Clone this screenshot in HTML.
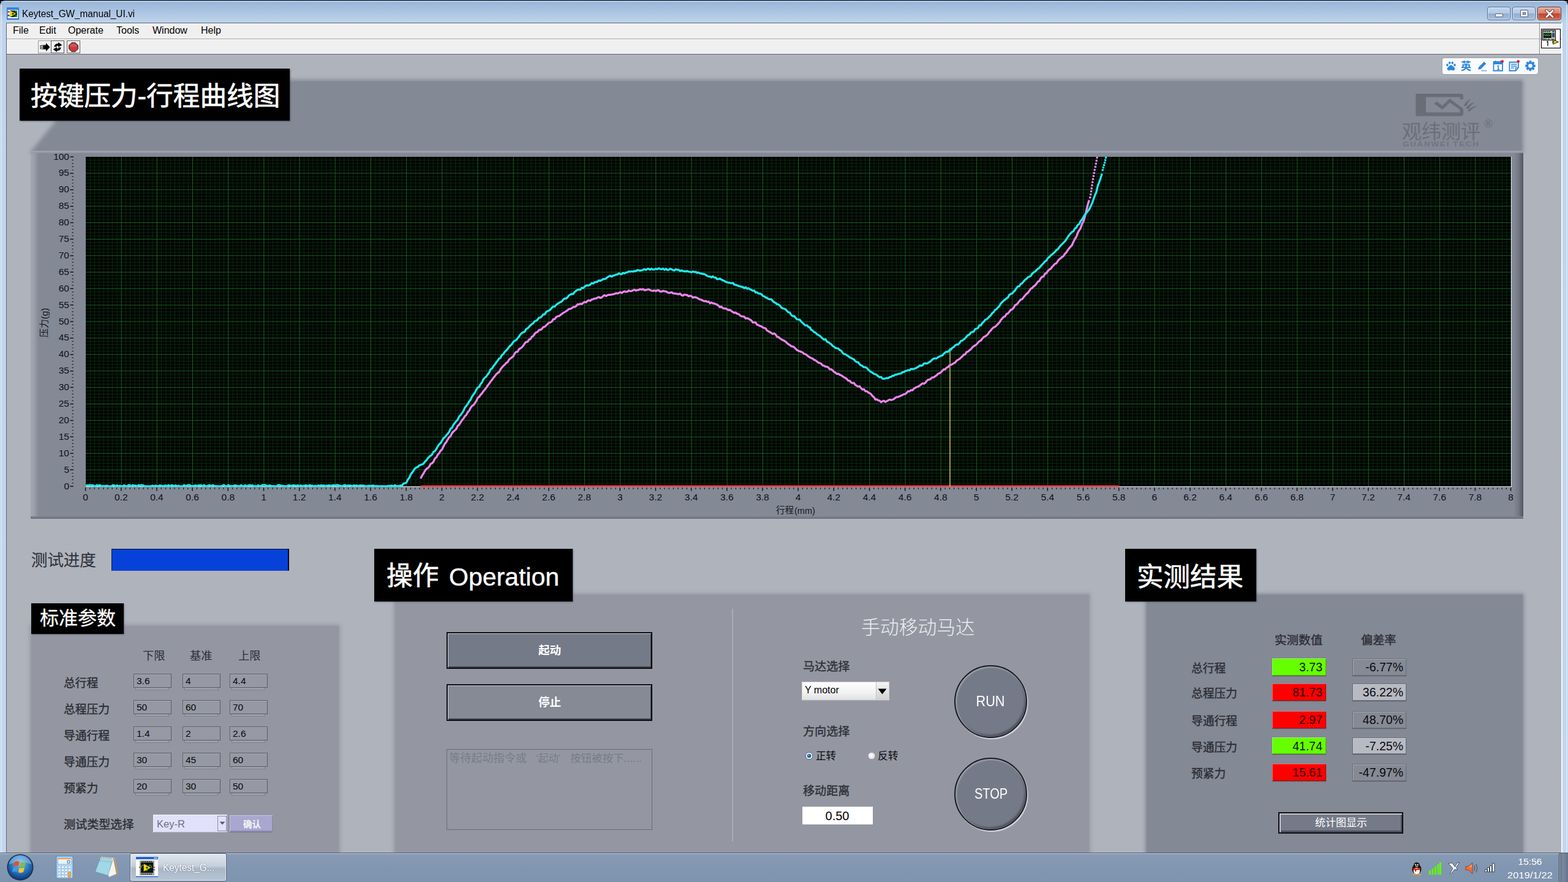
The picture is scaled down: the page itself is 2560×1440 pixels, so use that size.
<!DOCTYPE html>
<html lang="zh"><head><meta charset="utf-8"><title>Keytest_GW_manual_UI.vi</title>
<style>

html,body{margin:0;padding:0;background:#000;}
body{width:2560px;height:1440px;overflow:hidden;font-family:"Liberation Sans",sans-serif;}
#root{position:relative;width:2560px;height:1440px;overflow:hidden;background:#000;}
#root div{position:absolute;box-sizing:border-box;}
#root svg{position:absolute;}
.t{white-space:nowrap;font-family:"Liberation Sans",sans-serif;}
.num{background:#9598a3;border:1px solid #5f626c;box-shadow:0 4px 0 -1px #9fa2ad, 0 5px 0 -1px #6d707a;}
.btn{background:#757a88;border:2px solid #0b0b10;box-shadow:inset 1px 1px 0 #c9ccd4, inset -1px -2px 0 #4a4d58;}
svg text{font-family:"Liberation Sans","Noto Sans CJK SC",sans-serif;white-space:pre;}

</style></head><body>
<div id="root">
<div style="left:0px;top:1px;width:2560px;height:1392px;background:linear-gradient(180deg,#98b5d8 0px,#a6c0df 14px,#b4cbe6 26px,#c0d4ec 37px,#c3d6ed 100%);border-radius:8px 8px 0 0;"></div>
<div style="left:1px;top:8px;width:2px;height:1384px;background:#dbe8f6;opacity:.8;"></div>
<div style="left:2557px;top:8px;width:2px;height:1384px;background:#dbe8f6;opacity:.8;"></div>
<div style="left:1px;top:2px;width:2558px;height:1px;background:#dfeaf7;opacity:.7;border-radius:8px;"></div>
<div style="left:10px;top:37px;width:2539px;height:1356px;background:#5d6673;"></div>
<div style="left:2549px;top:37px;width:2px;height:1356px;background:#f4f8fd;"></div>
<svg style="left:11px;top:12px" width="20" height="20" viewBox="0 0 20 20"><rect x="0" y="0" width="20" height="20" fill="#1f6fd6"/><rect x="0" y="0" width="20" height="3" fill="#2a8ae8"/><rect x="1.5" y="4" width="17" height="14" fill="#fff"/><rect x="5" y="5" width="12" height="11" fill="#1d3a14"/><path d="M5 5 L15 10.5 L5 16 Z" fill="#f2d40c"/><path d="M12 5h5v4z M12 16h5v-4z" fill="#3b8a2a"/><rect x="1.5" y="6" width="3" height="2.5" fill="#d62a1a"/><rect x="1.5" y="12" width="3" height="2.5" fill="#1f3fc0"/><path d="M8 10.5h4M10 8.5v4" stroke="#222" stroke-width="1.2"/></svg>
<div class="t" style="left:35.5px;top:13px;font-size:16px;line-height:20px;color:#000;transform:scaleX(0.958);transform-origin:0 0;">Keytest_GW_manual_UI.vi</div>
<div style="left:2428px;top:11px;width:38px;height:22px;border:1px solid #5b6f8c;border-radius:4px;box-shadow:inset 0 0 0 1px rgba(255,255,255,.55);background:linear-gradient(180deg,#c3d6ee 0%,#b3c9e6 48%,#93aed3 52%,#a7c0e0 100%);"><div style="left:12px;top:10px;width:13px;height:6px;background:#f4f6fa;border:1px solid #56657c;border-radius:1px;"></div></div>
<div style="left:2469px;top:11px;width:38px;height:22px;border:1px solid #5b6f8c;border-radius:4px;box-shadow:inset 0 0 0 1px rgba(255,255,255,.55);background:linear-gradient(180deg,#c3d6ee 0%,#b3c9e6 48%,#93aed3 52%,#a7c0e0 100%);"><div style="left:12px;top:4px;width:13px;height:12px;background:#eef1f6;border:1px solid #56657c;border-radius:1px;"></div><div style="left:16px;top:8px;width:5px;height:4px;background:#9fb3d0;border:1px solid #56657c;"></div></div>
<div style="left:2510px;top:11px;width:39px;height:22px;border:1px solid #5a2a25;border-radius:4px;box-shadow:inset 0 0 0 1px rgba(255,255,255,.45);background:linear-gradient(180deg,#e9a99b 0%,#dc7f6c 48%,#c6442a 52%,#d2654a 100%);"><svg style="left:11px;top:3px" width="16" height="15" viewBox="0 0 16 15"><path d="M3 2.5 L13 12.5 M13 2.5 L3 12.5" stroke="#5a3a38" stroke-width="4.6" stroke-linecap="square"/><path d="M3 2.5 L13 12.5 M13 2.5 L3 12.5" stroke="#fff" stroke-width="2.8" stroke-linecap="square"/></svg></div>
<div style="left:11px;top:38px;width:2538px;height:25px;background:#f0f0f0;"></div>
<div class="t" style="left:21px;top:40px;font-size:16px;line-height:20px;color:#000;">File</div>
<div class="t" style="left:64px;top:40px;font-size:16px;line-height:20px;color:#000;">Edit</div>
<div class="t" style="left:111px;top:40px;font-size:16px;line-height:20px;color:#000;">Operate</div>
<div class="t" style="left:190px;top:40px;font-size:16px;line-height:20px;color:#000;">Tools</div>
<div class="t" style="left:249px;top:40px;font-size:16px;line-height:20px;color:#000;">Window</div>
<div class="t" style="left:328px;top:40px;font-size:16px;line-height:20px;color:#000;">Help</div>
<div style="left:11px;top:63px;width:2503px;height:1px;background:#a5a5a5;"></div>
<div style="left:11px;top:64px;width:2538px;height:25px;background:#f0f0f0;"></div>
<div style="left:11px;top:64px;width:2503px;height:1px;background:#fbfbfb;"></div>
<div style="left:11px;top:88px;width:2538px;height:1px;background:#63656b;"></div>
<div style="left:2513px;top:38px;width:1px;height:50px;background:#8a8a8a;"></div>
<div style="left:2514px;top:38px;width:1px;height:50px;background:#fdfdfd;"></div>
<div style="left:62px;top:66px;width:22px;height:21px;background:#f0f0f0;border:1px solid #9a9a9a;"><svg style="left:2px;top:3px" width="17" height="14" viewBox="0 0 17 14"><path d="M6.5 3.5h3.5V0l6.5 7L10 14v-3.5H6.5z" fill="#000"/><path d="M0.5 4h1.6v1.5H0.5zM0.5 6.3h1.6v1.5H0.5zM0.5 8.600h1.6v1.5H0.5zM2.800 3.500h1.500v1.600H2.800zM2.800 6.300h1.500v1.500H2.800zM2.800 9h1.500v1.600H2.800zM5 3.500h1.500v7H5z" fill="#000"/></svg></div>
<div style="left:83px;top:66px;width:22px;height:21px;background:#f0f0f0;border:1px solid #555;"><svg style="left:1px;top:2px" width="18" height="16" viewBox="0 0 18 16"><path d="M3.5 7.5 C3.5 3.5 7 2 10 2.2 L10 0 L16.5 4.5 L10 8 L10 5.8 C8 5.6 7 6.2 7.5 7.5 Z" fill="#000"/><path d="M14.5 8.5 C14.5 12.5 11 14 8 13.8 L8 16 L1.5 11.5 L8 8 L8 10.2 C10 10.4 11 9.8 10.5 8.5 Z" fill="#000"/></svg></div>
<div style="left:109px;top:66px;width:22px;height:21px;background:#f0f0f0;border:1px solid #666;"><svg style="left:2px;top:2px" width="16" height="16" viewBox="0 0 16 16"><path d="M5 0.7h6L15.3 5v6L11 15.3H5L0.7 11V5z" fill="#c43a3a" stroke="#1a1a1a" stroke-width="1"/><path d="M5.5 2.5h5l3 3v2h-11v-2z" fill="#d96a6a" opacity=".6"/></svg></div>
<svg style="left:2516px;top:47px" width="32" height="32" viewBox="0 0 32 32"><rect x="0.5" y="0.5" width="31" height="31" fill="#fff" stroke="#000" stroke-width="1.2"/><rect x="2.5" y="2.5" width="21" height="16" fill="#c8c8c8" stroke="#111" stroke-width="1.2"/><rect x="4" y="7" width="13" height="8" fill="#0b1a0b"/><path d="M4.5 11 l1.5-2 1.5 3 1.5-3 1.5 3 1.5-3 1.5 3 1.5-2.5 1 1.5" stroke="#2fd23a" stroke-width="0.9" fill="none"/><path d="M4 4.8h2M7 4.8h2M10 4.8h2M13 4.8h2M18.5 4.8h3" stroke="#111" stroke-width="1.4"/><rect x="18.5" y="7.5" width="3.2" height="6" fill="#2c4f9e" stroke="#111" stroke-width=".6"/><path d="M4 16.8h5M11 16.8h3M17 16.8h4" stroke="#333" stroke-width="1"/><path d="M19.5 18 L28.5 21.5 L19.5 25 Z" fill="#f4e80c" stroke="#111" stroke-width="1"/><path d="M18 21.5h4" stroke="#111" stroke-width="1"/><path d="M9.2 21.5 l1.8-1 v7.5" stroke="#000" stroke-width="1.3" fill="none"/></svg>
<div style="left:11px;top:89px;width:2538px;height:1304px;background:#afb3bc;"></div>
<div style="left:2355px;top:95px;width:156px;height:26px;background:#fbfbfd;border-radius:3px;box-shadow:0 0 2px rgba(80,80,100,.5);"><svg style="left:5px;top:4px" width="18" height="18" viewBox="0 0 18 18"><g fill="#2b86dc"><ellipse cx="3" cy="7.2" rx="1.7" ry="2.1"/><ellipse cx="6.7" cy="3.6" rx="1.7" ry="2.2"/><ellipse cx="11.3" cy="3.6" rx="1.7" ry="2.2"/><ellipse cx="15" cy="7.2" rx="1.7" ry="2.1"/><path d="M9 7.2c2.2 0 3.2 2 4.6 3.4 1.6 1.5 2.2 2.6 1.4 4.2-.8 1.5-2.6 1.2-3.8.9-1.4-.3-2.9-.3-4.400 0-1.2.3-3 .6-3.8-.9-.8-1.6-.2-2.7 1.4-4.2C5.800 9.2 6.800 7.2 9 7.2z"/></g></svg><svg role="img" aria-label="英" style="position:absolute;left:30.0px;top:3.0px;overflow:visible;" width="19.0" height="23.8"><text x="0" y="15.98" font-size="17" font-weight="bold" fill="#2b86dc">英</text></svg><svg style="left:56px;top:4px" width="19" height="18" viewBox="0 0 19 18"><path d="M2 14.5 L3.200 10.500 L12 1.700 L15.300 5 L6.500 13.800 Z" fill="#2b86dc"/><path d="M8 16.500h9" stroke="#2b86dc" stroke-width="1.300" stroke-dasharray="2 1"/></svg><svg style="left:82px;top:2px" width="20" height="21" viewBox="0 0 20 21"><path d="M1.500 4h14.500v14.500H1.500z" fill="#fff" stroke="#2b86dc" stroke-width="1.800"/><path d="M1.500 4h14.500v4H1.500z" fill="#2b86dc"/><path d="M4.500 2v3.500M13 2v3.500" stroke="#2b86dc" stroke-width="1.800"/><path d="M7.500 11.300l1.800-.8v6M7.300 16.500h4" stroke="#2b86dc" stroke-width="1.500" fill="none"/><circle cx="15.800" cy="3.200" r="2.300" fill="#e8202a"/></svg><svg style="left:108px;top:2px" width="20" height="21" viewBox="0 0 20 21"><path d="M1.500 4.500h14.500v9l-4.500 5H1.500z" fill="#fff" stroke="#2b86dc" stroke-width="1.800"/><path d="M4 8h9.500M4 11h9.500M4 14h5" stroke="#2b86dc" stroke-width="1.400"/><path d="M11.500 18.500v-5h4.500" fill="none" stroke="#2b86dc" stroke-width="1.400"/><circle cx="15.800" cy="3.200" r="2.300" fill="#e8202a"/></svg><svg style="left:134px;top:3px" width="19" height="19" viewBox="-9.500 -9.500 19 19"><g fill="#2b86dc"><rect x="-1.900" y="-8.300" width="3.800" height="4" transform="rotate(0)"/><rect x="-1.900" y="-8.300" width="3.800" height="4" transform="rotate(45)"/><rect x="-1.900" y="-8.300" width="3.800" height="4" transform="rotate(90)"/><rect x="-1.900" y="-8.300" width="3.800" height="4" transform="rotate(135)"/><rect x="-1.900" y="-8.300" width="3.800" height="4" transform="rotate(180)"/><rect x="-1.900" y="-8.300" width="3.800" height="4" transform="rotate(225)"/><rect x="-1.900" y="-8.300" width="3.800" height="4" transform="rotate(270)"/><rect x="-1.900" y="-8.300" width="3.800" height="4" transform="rotate(315)"/><circle r="6.300"/></g><circle r="3.300" fill="#fbfbfd"/></svg></div>
<svg style="left:0;top:0" width="2560" height="300" viewBox="0 0 2560 300"><defs><filter id="bl1" x="-5%" y="-20%" width="110%" height="140%"><feGaussianBlur stdDeviation="3"/></filter></defs><path d="M92 130 H2487 V250 H48 L92 196 Z" fill="#838995" filter="url(#bl1)"/><path d="M100 133 H2484 V250 H56 L100 200 Z" fill="#838995"/></svg>
<div style="left:50px;top:247px;width:2437px;height:599px;background:linear-gradient(90deg,#a3a7b1 0px,#9a9ea8 6px,#838995 13px,#838995 2421px,#757986 2429px,#525563 2437px);box-shadow:0 -1px 0 #9da1ab, 0 1px 0 #6b6f7a;"></div>
<div style="left:50px;top:247px;width:2437px;height:3px;background:linear-gradient(180deg,#a4a8b2,#8f939e);opacity:.9;"></div>
<div style="left:50px;top:843px;width:2437px;height:3px;background:linear-gradient(180deg,#7e828d,#70747f);"></div>
<svg style="left:2300px;top:148px" width="130" height="50" viewBox="0 0 130 50"><path d="M11.500 5 H85 q4 0 4 4 v5 h-5.500 v-3.500 H28 v25 H83.500 v-4.500 L67 19.500 55 31 41.500 21.500 45.500 17.500 55 24.500 67 13 89 29.500 V37.500 q0 4 -4 4 H11.500 z" fill="#696d77"/><path d="M89.500 25 q4-9 12-11 q-5 4-7 11z M93 29 q6-9 15-10 q-7 4-10 11z M96 33 q7-8 16-8 q-8 3-12 9z" fill="#696d77"/></svg>
<svg role="img" aria-label="观纬测评" style="position:absolute;left:2288.5px;top:196.0px;overflow:visible;" width="130.0" height="44.1"><text x="0" y="29.61" font-size="32" fill="#6b6f79">观纬测评</text></svg>
<div class="t" style="left:2289.5px;top:228.5px;font-size:11px;line-height:12px;color:#70747e;font-weight:bold;letter-spacing:1.2px;transform:scaleX(1.25);transform-origin:0 0;">GUANWEI TECH</div>
<div class="t" style="left:2423px;top:190.5px;font-size:19px;line-height:22px;color:#6f737d;font-weight:bold;">&#174;</div>
<div style="left:32px;top:112px;width:441px;height:85px;background:#000;box-shadow:1px 1px 2px rgba(40,40,50,.6);"></div>
<svg role="img" aria-label="按键压力-行程曲线图" style="position:absolute;left:50.0px;top:131.5px;overflow:visible;" width="410.0" height="60.2"><text x="0" y="40.42" font-size="43.65" fill="#fff" stroke="#fff" stroke-width="0.7" stroke-linejoin="round">按键压力-行程曲线图</text></svg>
<svg style="left:139.6px;top:256.0px" width="2328" height="539" viewBox="0 0 2328 539"><rect x="0" y="0" width="2328" height="539" fill="#020503"/><path d="M7.3 0V538M14.5 0V538M21.8 0V538M29.1 0V538M36.4 0V538M43.6 0V538M50.9 0V538M65.4 0V538M72.7 0V538M80.0 0V538M87.3 0V538M94.5 0V538M101.8 0V538M109.1 0V538M123.6 0V538M130.9 0V538M138.2 0V538M145.4 0V538M152.7 0V538M160.0 0V538M167.3 0V538M181.8 0V538M189.1 0V538M196.3 0V538M203.6 0V538M210.9 0V538M218.2 0V538M225.4 0V538M240.0 0V538M247.2 0V538M254.5 0V538M261.8 0V538M269.1 0V538M276.3 0V538M283.6 0V538M298.1 0V538M305.4 0V538M312.7 0V538M320.0 0V538M327.2 0V538M334.5 0V538M341.8 0V538M356.3 0V538M363.6 0V538M370.9 0V538M378.1 0V538M385.4 0V538M392.7 0V538M400.0 0V538M414.5 0V538M421.8 0V538M429.0 0V538M436.3 0V538M443.6 0V538M450.9 0V538M458.1 0V538M472.7 0V538M479.9 0V538M487.2 0V538M494.5 0V538M501.8 0V538M509.0 0V538M516.3 0V538M530.8 0V538M538.1 0V538M545.4 0V538M552.7 0V538M559.9 0V538M567.2 0V538M574.5 0V538M589.0 0V538M596.3 0V538M603.6 0V538M610.8 0V538M618.1 0V538M625.4 0V538M632.7 0V538M647.2 0V538M654.5 0V538M661.7 0V538M669.0 0V538M676.3 0V538M683.6 0V538M690.8 0V538M705.4 0V538M712.6 0V538M719.9 0V538M727.2 0V538M734.5 0V538M741.7 0V538M749.0 0V538M763.5 0V538M770.8 0V538M778.1 0V538M785.4 0V538M792.6 0V538M799.9 0V538M807.2 0V538M821.7 0V538M829.0 0V538M836.3 0V538M843.5 0V538M850.8 0V538M858.1 0V538M865.4 0V538M879.9 0V538M887.2 0V538M894.4 0V538M901.7 0V538M909.0 0V538M916.3 0V538M923.5 0V538M938.1 0V538M945.3 0V538M952.6 0V538M959.9 0V538M967.2 0V538M974.4 0V538M981.7 0V538M996.2 0V538M1003.5 0V538M1010.8 0V538M1018.1 0V538M1025.3 0V538M1032.6 0V538M1039.9 0V538M1054.4 0V538M1061.7 0V538M1069.0 0V538M1076.2 0V538M1083.5 0V538M1090.8 0V538M1098.1 0V538M1112.6 0V538M1119.9 0V538M1127.1 0V538M1134.4 0V538M1141.7 0V538M1149.0 0V538M1156.2 0V538M1170.8 0V538M1178.0 0V538M1185.3 0V538M1192.6 0V538M1199.9 0V538M1207.1 0V538M1214.4 0V538M1228.9 0V538M1236.2 0V538M1243.5 0V538M1250.8 0V538M1258.0 0V538M1265.3 0V538M1272.6 0V538M1287.1 0V538M1294.4 0V538M1301.7 0V538M1308.9 0V538M1316.2 0V538M1323.5 0V538M1330.8 0V538M1345.3 0V538M1352.6 0V538M1359.8 0V538M1367.1 0V538M1374.4 0V538M1381.7 0V538M1388.9 0V538M1403.5 0V538M1410.7 0V538M1418.0 0V538M1425.3 0V538M1432.6 0V538M1439.8 0V538M1447.1 0V538M1461.6 0V538M1468.9 0V538M1476.2 0V538M1483.5 0V538M1490.7 0V538M1498.0 0V538M1505.3 0V538M1519.8 0V538M1527.1 0V538M1534.4 0V538M1541.6 0V538M1548.9 0V538M1556.2 0V538M1563.5 0V538M1578.0 0V538M1585.3 0V538M1592.5 0V538M1599.8 0V538M1607.1 0V538M1614.4 0V538M1621.6 0V538M1636.2 0V538M1643.4 0V538M1650.7 0V538M1658.0 0V538M1665.3 0V538M1672.5 0V538M1679.8 0V538M1694.3 0V538M1701.6 0V538M1708.9 0V538M1716.2 0V538M1723.4 0V538M1730.7 0V538M1738.0 0V538M1752.5 0V538M1759.8 0V538M1767.1 0V538M1774.3 0V538M1781.6 0V538M1788.9 0V538M1796.2 0V538M1810.7 0V538M1818.0 0V538M1825.2 0V538M1832.5 0V538M1839.8 0V538M1847.1 0V538M1854.3 0V538M1868.9 0V538M1876.1 0V538M1883.4 0V538M1890.7 0V538M1898.0 0V538M1905.2 0V538M1912.5 0V538M1927.0 0V538M1934.3 0V538M1941.6 0V538M1948.9 0V538M1956.1 0V538M1963.4 0V538M1970.7 0V538M1985.2 0V538M1992.5 0V538M1999.8 0V538M2007.0 0V538M2014.3 0V538M2021.6 0V538M2028.9 0V538M2043.4 0V538M2050.7 0V538M2057.9 0V538M2065.2 0V538M2072.5 0V538M2079.8 0V538M2087.0 0V538M2101.6 0V538M2108.8 0V538M2116.1 0V538M2123.4 0V538M2130.7 0V538M2137.9 0V538M2145.2 0V538M2159.7 0V538M2167.0 0V538M2174.3 0V538M2181.6 0V538M2188.8 0V538M2196.1 0V538M2203.4 0V538M2217.9 0V538M2225.2 0V538M2232.5 0V538M2239.7 0V538M2247.0 0V538M2254.3 0V538M2261.6 0V538M2276.1 0V538M2283.4 0V538M2290.6 0V538M2297.9 0V538M2305.2 0V538M2312.5 0V538M2319.7 0V538M0 5.4H2327M0 10.8H2327M0 16.1H2327M0 21.5H2327M0 32.3H2327M0 37.7H2327M0 43.0H2327M0 48.4H2327M0 59.2H2327M0 64.6H2327M0 69.9H2327M0 75.3H2327M0 86.1H2327M0 91.5H2327M0 96.8H2327M0 102.2H2327M0 113.0H2327M0 118.4H2327M0 123.7H2327M0 129.1H2327M0 139.9H2327M0 145.3H2327M0 150.6H2327M0 156.0H2327M0 166.8H2327M0 172.2H2327M0 177.5H2327M0 182.9H2327M0 193.7H2327M0 199.1H2327M0 204.4H2327M0 209.8H2327M0 220.6H2327M0 226.0H2327M0 231.3H2327M0 236.7H2327M0 247.5H2327M0 252.9H2327M0 258.2H2327M0 263.6H2327M0 274.4H2327M0 279.8H2327M0 285.1H2327M0 290.5H2327M0 301.3H2327M0 306.7H2327M0 312.0H2327M0 317.4H2327M0 328.2H2327M0 333.6H2327M0 338.9H2327M0 344.3H2327M0 355.1H2327M0 360.5H2327M0 365.8H2327M0 371.2H2327M0 382.0H2327M0 387.4H2327M0 392.7H2327M0 398.1H2327M0 408.9H2327M0 414.3H2327M0 419.6H2327M0 425.0H2327M0 435.8H2327M0 441.2H2327M0 446.5H2327M0 451.9H2327M0 462.7H2327M0 468.1H2327M0 473.4H2327M0 478.8H2327M0 489.6H2327M0 495.0H2327M0 500.3H2327M0 505.7H2327M0 516.5H2327M0 521.9H2327M0 527.2H2327M0 532.6H2327" stroke="#0b2b11" stroke-width="0.9" fill="none"/><path d="M58.2 0V538M116.3 0V538M174.5 0V538M232.7 0V538M290.9 0V538M349.0 0V538M407.2 0V538M465.4 0V538M523.6 0V538M581.8 0V538M639.9 0V538M698.1 0V538M756.3 0V538M814.4 0V538M872.6 0V538M930.8 0V538M989.0 0V538M1047.1 0V538M1105.3 0V538M1163.5 0V538M1221.7 0V538M1279.8 0V538M1338.0 0V538M1396.2 0V538M1454.4 0V538M1512.5 0V538M1570.7 0V538M1628.9 0V538M1687.1 0V538M1745.2 0V538M1803.4 0V538M1861.6 0V538M1919.8 0V538M1977.9 0V538M2036.1 0V538M2094.3 0V538M2152.5 0V538M2210.7 0V538M2268.8 0V538M0 26.9H2327M0 53.8H2327M0 80.7H2327M0 107.6H2327M0 134.5H2327M0 161.4H2327M0 188.3H2327M0 215.2H2327M0 242.1H2327M0 269.0H2327M0 295.9H2327M0 322.8H2327M0 349.7H2327M0 376.6H2327M0 403.5H2327M0 430.4H2327M0 457.3H2327M0 484.2H2327M0 511.1H2327" stroke="#186024" stroke-width="1" fill="none"/><path d="M2327.5 0V539M0 538.5H2328" stroke="#e8e8ec" stroke-width="1.2" fill="none"/><path d="M546.8 537.5H1687.1" stroke="#f5262c" stroke-width="2.4"/><path d="M1411.0 312.0V538" stroke="#f2e860" stroke-width="1.25"/><path d="M546.8 525.3 549.2 520.3 551.5 516.9 553.8 512.7 556.2 509.5 558.5 508.2 560.8 505.9 563.1 501.3 565.5 500.4 567.8 497.6 570.1 492.5 572.4 490.7 574.8 486.3 577.1 483.8 579.4 479.8 581.8 477.6 584.1 472.7 586.4 468.4 588.7 465.6 591.1 461.3 593.4 457.9 595.7 456.1 598.0 451.0 600.4 448.5 602.7 446.4 605.0 444.3 607.3 439.2 609.7 437.4 612.0 433.6 614.3 430.1 616.7 427.3 619.0 423.4 621.3 421.5 623.6 417.0 626.0 414.6 628.3 409.9 630.6 406.7 632.9 405.5 635.3 402.2 637.6 398.8 639.9 393.6 642.3 392.0 644.6 388.5 646.9 386.3 649.2 382.7 651.6 380.0 653.9 377.1 656.2 373.5 658.5 370.6 660.9 366.8 663.2 364.4 665.5 360.9 667.8 358.2 670.2 354.9 672.5 353.0 674.8 351.5 677.2 346.9 679.5 343.9 681.8 341.3 684.1 339.5 686.5 336.5 688.8 335.2 691.1 331.0 693.4 329.2 695.8 327.4 698.1 325.6 700.4 321.0 702.8 318.3 705.1 318.3 707.4 314.0 709.7 312.7 712.1 311.0 714.4 308.3 716.7 304.7 719.0 302.2 721.4 302.1 723.7 298.4 726.0 297.7 728.4 293.7 730.7 292.6 733.0 289.0 735.3 286.7 737.7 285.9 740.0 282.6 742.3 282.5 744.6 281.2 747.0 277.9 749.3 277.6 751.6 275.4 753.9 273.1 756.3 270.9 758.6 270.4 760.9 269.1 763.3 265.2 765.6 265.1 767.9 261.8 770.2 260.4 772.6 260.2 774.9 258.4 777.2 256.7 779.5 254.9 781.9 253.6 784.2 252.2 786.5 250.7 788.9 248.4 791.2 248.3 793.5 247.2 795.8 245.1 798.2 245.2 800.5 243.9 802.8 240.9 805.1 241.0 807.5 239.9 809.8 240.4 812.1 238.4 814.5 237.0 816.8 237.7 819.1 235.3 821.4 234.4 823.8 235.2 826.1 232.9 828.4 232.6 830.7 231.3 833.1 231.4 835.4 229.8 837.7 229.0 840.0 230.3 842.4 229.6 844.7 227.3 847.0 225.9 849.4 227.3 851.7 226.1 854.0 225.2 856.3 225.4 858.7 224.8 861.0 224.4 863.3 223.8 865.6 222.7 868.0 223.1 870.3 222.4 872.6 220.9 875.0 222.5 877.3 220.6 879.6 219.7 881.9 220.4 884.3 220.2 886.6 218.2 888.9 219.4 891.2 219.1 893.6 218.1 895.9 217.1 898.2 218.4 900.5 217.6 902.9 217.4 905.2 216.0 907.5 217.0 909.9 215.9 912.2 217.8 914.5 217.5 916.8 216.8 919.2 216.3 921.5 217.7 923.8 218.5 926.1 219.0 928.5 218.1 930.8 219.3 933.1 217.8 935.5 218.0 937.8 220.0 940.1 220.0 942.4 218.9 944.8 219.7 947.1 219.6 949.4 221.2 951.7 222.1 954.1 222.1 956.4 221.1 958.7 222.9 961.1 223.1 963.4 223.4 965.7 223.8 968.0 224.3 970.4 223.4 972.7 225.9 975.0 226.8 977.3 224.8 979.7 225.5 982.0 225.7 984.3 227.8 986.6 226.9 989.0 227.5 991.3 230.0 993.6 229.1 996.0 229.5 998.3 230.6 1000.6 231.7 1002.9 233.0 1005.3 233.6 1007.6 234.7 1009.9 235.9 1012.2 235.3 1014.6 236.9 1016.9 236.3 1019.2 239.2 1021.6 237.8 1023.9 239.2 1026.2 239.5 1028.5 240.5 1030.9 241.4 1033.2 243.2 1035.5 245.6 1037.8 244.6 1040.2 247.1 1042.5 247.7 1044.8 247.7 1047.2 249.0 1049.5 250.3 1051.8 249.9 1054.1 251.8 1056.5 253.5 1058.8 254.8 1061.1 254.2 1063.4 256.3 1065.8 256.6 1068.1 258.9 1070.4 260.4 1072.7 260.7 1075.1 261.1 1077.4 264.0 1079.7 263.5 1082.1 264.4 1084.4 265.9 1086.7 267.1 1089.0 270.5 1091.4 270.1 1093.7 270.7 1096.0 274.2 1098.3 274.9 1100.7 276.2 1103.0 276.8 1105.3 278.4 1107.7 279.5 1110.0 280.1 1112.3 283.6 1114.6 284.9 1117.0 286.1 1119.3 287.6 1121.6 289.2 1123.9 288.3 1126.3 290.1 1128.6 293.8 1130.9 294.2 1133.2 296.3 1135.6 297.8 1137.9 299.3 1140.2 300.1 1142.6 301.8 1144.9 304.0 1147.2 306.0 1149.5 307.2 1151.9 309.3 1154.2 309.7 1156.5 310.8 1158.8 313.2 1161.2 315.5 1163.5 316.7 1165.8 317.6 1168.2 318.4 1170.5 319.4 1172.8 321.9 1175.1 322.1 1177.5 324.0 1179.8 325.9 1182.1 327.5 1184.4 328.6 1186.8 329.4 1189.1 331.5 1191.4 332.2 1193.8 334.2 1196.1 336.1 1198.4 336.7 1200.7 337.7 1203.1 340.7 1205.4 341.2 1207.7 342.6 1210.0 342.7 1212.4 344.0 1214.7 346.9 1217.0 346.9 1219.3 348.6 1221.7 351.4 1224.0 352.3 1226.3 354.6 1228.7 354.1 1231.0 355.9 1233.3 356.7 1235.6 358.3 1238.0 360.0 1240.3 361.1 1242.6 362.9 1244.9 365.5 1247.3 365.6 1249.6 368.5 1251.9 369.5 1254.3 369.2 1256.6 372.6 1258.9 373.9 1261.2 375.3 1263.6 374.7 1265.9 378.1 1268.2 380.0 1270.5 379.4 1272.9 382.9 1275.2 382.6 1277.5 384.7 1279.9 385.9 1282.2 387.5 1284.5 390.7 1286.8 392.3 1289.2 396.3 1291.5 395.8 1293.8 397.7 1296.1 398.2 1298.5 400.6 1300.8 399.1 1303.1 398.3 1305.4 400.2 1307.8 398.9 1310.1 397.7 1312.4 396.3 1314.8 397.1 1317.1 396.5 1319.4 395.4 1321.7 393.5 1324.1 392.1 1326.4 392.1 1328.7 391.1 1331.0 389.9 1333.4 388.9 1335.7 387.6 1338.0 387.4 1340.4 385.2 1342.7 382.7 1345.0 383.1 1347.3 380.9 1349.7 381.3 1352.0 378.6 1354.3 377.1 1356.6 376.0 1359.0 375.1 1361.3 373.8 1363.6 372.0 1365.9 369.9 1368.3 370.5 1370.6 369.2 1372.9 366.0 1375.3 364.0 1377.6 363.6 1379.9 362.3 1382.2 360.1 1384.6 360.0 1386.9 358.2 1389.2 356.8 1391.5 354.2 1393.9 353.4 1396.2 352.0 1398.5 349.2 1400.9 346.9 1403.2 347.0 1405.5 344.3 1407.8 343.4 1410.2 340.6 1412.5 339.6 1414.8 338.7 1417.1 337.1 1419.5 335.9 1421.8 332.9 1424.1 331.4 1426.5 330.1 1428.8 327.8 1431.1 326.0 1433.4 323.0 1435.8 322.8 1438.1 318.6 1440.4 318.1 1442.7 315.8 1445.1 314.2 1447.4 311.2 1449.7 309.3 1452.0 308.0 1454.4 306.2 1456.7 303.5 1459.0 301.0 1461.4 300.1 1463.7 297.0 1466.0 294.2 1468.3 293.3 1470.7 291.7 1473.0 289.4 1475.3 285.8 1477.6 283.6 1480.0 280.5 1482.3 278.4 1484.6 277.6 1487.0 275.4 1489.3 272.8 1491.6 270.6 1493.9 266.8 1496.3 263.9 1498.6 261.4 1500.9 260.7 1503.2 256.6 1505.6 255.700 1507.9 253.0 1510.2 249.8 1512.6 249.1 1514.9 246.7 1517.2 242.3 1519.5 241.4 1521.9 238.8 1524.2 235.8 1526.5 233.1 1528.8 232.5 1531.2 229.2 1533.5 226.5 1535.8 223.9 1538.1 222.2 1540.5 218.8 1542.8 215.3 1545.1 214.4 1547.5 211.5 1549.8 210.2 1552.1 207.3 1554.4 203.8 1556.8 202.9 1559.1 198.3 1561.4 195.8 1563.7 195.6 1566.1 190.9 1568.4 190.0 1570.7 186.5 1573.1 184.1 1575.4 183.0 1577.7 179.7 1580.0 177.4 1582.4 174.7 1584.7 173.9 1587.0 170.2 1589.3 167.3 1591.7 165.7 1594.0 163.5 1596.3 162.1 1598.6 158.5 1601.0 156.1 1603.3 152.3 1605.6 149.5 1608.0 146.6 1610.3 144.1 1612.6 138.7 1614.9 134.2 1617.3 130.7 1619.6 124.1 1621.9 120.1 1624.2 116.6 1626.6 109.4 1628.9 105.7 1631.2 97.7 1633.6 87.8 1635.9 78.5 1638.2 70.7" stroke="#ee84ee" stroke-width="3.3" fill="none" stroke-linejoin="round"/><rect x="1638.1" y="64.8" width="3.2" height="3.2" fill="#ee84ee"/><rect x="1639.1" y="59.8" width="3.2" height="3.2" fill="#ee84ee"/><rect x="1639.9" y="54.8" width="3.2" height="3.2" fill="#ee84ee"/><rect x="1640.6" y="49.8" width="3.2" height="3.2" fill="#ee84ee"/><rect x="1641.3" y="44.8" width="3.2" height="3.2" fill="#ee84ee"/><rect x="1642.1" y="39.8" width="3.2" height="3.2" fill="#ee84ee"/><rect x="1642.9" y="34.8" width="3.2" height="3.2" fill="#ee84ee"/><rect x="1643.8" y="29.8" width="3.2" height="3.2" fill="#ee84ee"/><rect x="1644.7" y="24.7" width="3.2" height="3.2" fill="#ee84ee"/><rect x="1645.6" y="19.7" width="3.2" height="3.2" fill="#ee84ee"/><rect x="1646.7" y="14.7" width="3.2" height="3.2" fill="#ee84ee"/><rect x="1647.7" y="9.7" width="3.2" height="3.2" fill="#ee84ee"/><rect x="1648.6" y="4.7" width="3.2" height="3.2" fill="#ee84ee"/><rect x="1649.5" y="-0.3" width="3.2" height="3.2" fill="#ee84ee"/><path d="M0.0 536.9 2.3 536.5 4.7 536.4 7.0 536.0 9.3 536.5 11.6 536.1 14.0 538.0 16.3 537.3 18.6 536.0 20.9 536.8 23.3 536.1 25.6 538.0 27.9 537.3 30.3 537.9 32.6 537.1 34.9 537.0 37.2 538.0 39.6 538.0 41.9 537.8 44.2 536.1 46.5 536.5 48.9 538.0 51.2 536.4 53.5 538.0 55.8 536.9 58.2 538.0 60.5 538.0 62.8 536.2 65.2 538.0 67.5 538.0 69.8 535.9 72.1 536.2 74.5 537.8 76.8 536.0 79.1 537.1 81.4 536.7 83.8 538.0 86.1 536.0 88.4 536.7 90.8 535.9 93.1 536.1 95.4 537.7 97.7 537.6 100.1 538.0 102.4 538.0 104.7 538.0 107.0 537.7 109.4 536.9 111.7 538.0 114.0 536.7 116.4 537.6 118.7 537.7 121.0 536.3 123.3 537.2 125.7 537.7 128.0 537.2 130.3 536.6 132.6 538.0 135.0 535.9 137.3 538.0 139.6 536.5 141.9 536.3 144.3 538.0 146.6 536.4 148.9 537.6 151.3 537.0 153.6 538.0 155.9 538.0 158.2 538.0 160.6 536.0 162.9 538.0 165.2 536.5 167.5 536.0 169.9 536.0 172.2 537.6 174.5 537.6 176.9 537.1 179.2 536.5 181.5 538.0 183.8 536.5 186.2 536.4 188.5 536.2 190.8 538.0 193.1 536.0 195.5 538.0 197.8 537.6 200.1 536.9 202.4 536.1 204.8 537.6 207.1 536.1 209.4 537.1 211.8 537.7 214.1 537.7 216.4 538.0 218.7 538.0 221.1 538.0 223.4 536.7 225.7 535.9 228.0 538.0 230.4 538.0 232.7 535.9 235.0 537.1 237.4 537.4 239.7 537.9 242.0 536.9 244.3 536.3 246.7 537.3 249.0 537.4 251.3 538.0 253.6 536.1 256.0 538.0 258.3 537.2 260.6 536.3 263.0 538.0 265.3 536.6 267.6 536.0 269.9 536.8 272.3 536.4 274.6 538.0 276.9 537.4 279.2 538.0 281.6 536.3 283.9 537.7 286.2 537.3 288.5 535.8 290.9 536.2 293.2 535.9 295.5 537.3 297.9 537.2 300.2 536.6 302.5 537.2 304.8 537.8 307.2 537.5 309.5 538.0 311.8 537.5 314.1 535.9 316.5 536.0 318.8 536.9 321.1 537.2 323.5 537.6 325.8 538.0 328.1 537.8 330.4 536.4 332.8 536.2 335.1 537.6 337.4 536.4 339.7 536.5 342.1 536.7 344.4 536.8 346.7 536.5 349.1 537.6 351.4 536.6 353.7 537.8 356.0 537.2 358.4 536.5 360.7 536.7 363.0 537.7 365.3 536.0 367.7 536.8 370.0 537.0 372.3 538.0 374.6 537.1 377.0 537.9 379.3 536.7 381.6 537.3 384.0 536.3 386.3 536.8 388.6 536.4 390.9 537.6 393.3 536.8 395.6 536.6 397.9 536.3 400.2 537.6 402.6 536.3 404.9 536.2 407.2 536.7 409.6 535.9 411.9 536.0 414.2 537.1 416.5 537.1 418.9 538.0 421.2 536.3 423.5 536.0 425.8 537.3 428.2 536.7 430.5 536.6 432.8 536.6 435.1 538.0 437.5 536.4 439.8 537.0 442.1 536.7 444.5 537.4 446.8 536.9 449.1 536.5 451.4 536.8 453.8 536.6 456.1 538.0 458.4 538.0 460.7 537.4 463.1 536.8 465.4 537.9 467.7 536.7 470.1 536.8 472.4 538.0 474.7 537.3 477.0 537.9 479.4 538.0 481.7 538.0 484.0 537.7 486.3 538.0 488.7 538.0 491.0 538.0 493.3 537.3 495.7 537.5 498.0 536.9 500.3 537.0 502.6 537.9 505.0 536.1 507.3 538.0 509.6 537.3 511.9 537.4 514.3 536.7 516.6 536.5 518.9 533.3 521.2 532.9 523.6 531.7 525.9 527.0 528.2 524.0 530.6 518.5 532.9 515.6 535.2 512.3 537.5 508.9 539.9 507.2 542.2 506.4 544.5 503.9 546.8 503.0 549.2 502.2 551.5 501.0 553.8 497.7 556.2 495.6 558.5 492.1 560.8 489.6 563.1 487.9 565.5 485.9 567.8 481.5 570.1 480.7 572.4 477.1 574.8 472.6 577.1 469.2 579.4 467.4 581.8 463.1 584.1 459.4 586.4 457.8 588.7 454.6 591.1 452.1 593.4 448.9 595.7 443.9 598.0 442.3 600.4 437.5 602.7 434.3 605.0 431.7 607.3 429.2 609.7 423.9 612.0 421.7 614.3 418.3 616.7 414.9 619.0 409.4 621.3 406.9 623.6 403.7 626.0 399.4 628.3 396.6 630.6 391.5 632.9 388.3 635.3 385.1 637.6 380.3 639.9 376.8 642.3 375.7 644.6 371.0 646.9 368.4 649.2 363.3 651.6 360.5 653.9 358.7 656.2 355.4 658.5 352.5 660.9 347.1 663.2 345.8 665.5 341.9 667.8 339.2 670.2 335.7 672.5 332.8 674.8 329.4 677.2 328.2 679.5 323.6 681.8 322.0 684.1 318.5 686.5 316.3 688.8 313.7 691.1 310.4 693.4 308.0 695.8 305.8 698.1 302.2 700.4 300.2 702.8 299.3 705.1 296.3 707.4 293.4 709.7 289.9 712.1 287.7 714.4 286.4 716.7 285.6 719.0 281.3 721.4 280.1 723.7 277.6 726.0 275.1 728.4 273.2 730.7 271.6 733.0 268.4 735.3 267.8 737.7 265.9 740.0 262.7 742.3 262.5 744.6 260.4 747.0 257.1 749.3 257.3 751.6 253.4 753.9 252.0 756.3 250.9 758.6 249.5 760.9 246.4 763.3 244.3 765.6 244.7 767.9 242.0 770.2 240.1 772.6 238.6 774.9 237.3 777.2 236.1 779.5 233.3 781.9 231.1 784.2 231.5 786.5 229.5 788.9 226.3 791.2 224.9 793.5 223.8 795.8 224.0 798.2 220.7 800.5 218.7 802.8 217.3 805.1 216.7 807.5 217.2 809.8 213.9 812.1 214.4 814.5 212.1 816.8 210.2 819.1 209.8 821.4 210.2 823.8 208.7 826.1 206.0 828.4 207.0 830.7 204.8 833.1 204.3 835.4 204.0 837.7 201.8 840.0 202.4 842.4 201.3 844.7 199.7 847.0 199.6 849.4 198.8 851.7 196.6 854.0 195.4 856.3 194.2 858.7 195.5 861.0 194.0 863.3 193.7 865.6 192.3 868.0 192.0 870.3 190.3 872.6 191.3 875.0 191.7 877.3 189.5 879.6 190.5 881.9 188.8 884.3 188.6 886.6 187.1 888.9 187.6 891.2 187.0 893.6 187.5 895.9 186.3 898.2 186.7 900.5 185.0 902.9 185.3 905.2 185.9 907.5 185.3 909.9 184.7 912.2 183.4 914.5 184.7 916.8 183.0 919.2 183.0 921.5 184.3 923.8 182.6 926.1 184.1 928.5 183.9 930.8 182.7 933.1 183.6 935.5 182.0 937.8 183.1 940.1 183.6 942.4 182.4 944.8 184.6 947.1 182.8 949.4 184.8 951.7 184.7 954.1 182.7 956.4 183.6 958.7 185.0 961.1 185.6 963.4 183.5 965.7 184.5 968.0 184.4 970.4 186.5 972.7 185.4 975.0 186.4 977.3 187.0 979.7 187.0 982.0 186.6 984.3 187.6 986.6 187.8 989.0 188.7 991.3 187.2 993.6 188.1 996.0 188.0 998.3 189.5 1000.6 188.9 1002.9 190.3 1005.3 190.6 1007.6 191.3 1009.9 191.4 1012.2 193.0 1014.6 194.5 1016.9 195.3 1019.2 195.6 1021.6 196.8 1023.9 195.2 1026.2 197.1 1028.5 197.1 1030.9 199.9 1033.2 199.4 1035.5 199.0 1037.8 200.5 1040.2 201.8 1042.5 202.5 1044.8 204.2 1047.2 204.8 1049.5 205.6 1051.8 205.7 1054.1 206.5 1056.5 205.9 1058.8 208.6 1061.1 209.1 1063.4 209.8 1065.8 210.9 1068.1 211.4 1070.4 212.3 1072.7 212.5 1075.1 214.5 1077.4 213.0 1079.7 215.4 1082.1 214.7 1084.4 216.3 1086.7 217.3 1089.0 218.7 1091.4 218.4 1093.7 221.7 1096.0 221.2 1098.3 223.2 1100.7 223.3 1103.0 224.2 1105.3 226.9 1107.7 227.9 1110.0 229.6 1112.3 230.4 1114.6 232.1 1117.0 232.7 1119.3 232.6 1121.6 235.7 1123.9 237.4 1126.3 238.5 1128.6 240.7 1130.9 241.1 1133.2 242.8 1135.6 246.0 1137.9 247.5 1140.2 248.0 1142.6 249.0 1144.9 251.6 1147.2 253.9 1149.5 254.2 1151.9 258.5 1154.2 260.1 1156.5 259.9 1158.8 262.6 1161.2 265.3 1163.5 265.6 1165.8 266.1 1168.2 269.1 1170.5 271.3 1172.8 273.7 1175.1 275.5 1177.5 275.0 1179.8 277.8 1182.1 278.4 1184.4 282.6 1186.8 283.8 1189.1 286.1 1191.4 287.0 1193.8 289.7 1196.1 290.9 1198.4 292.3 1200.7 294.4 1203.1 296.8 1205.4 298.6 1207.7 297.9 1210.0 301.7 1212.4 302.6 1214.7 304.6 1217.0 305.9 1219.3 308.8 1221.7 309.9 1224.0 312.1 1226.3 312.5 1228.7 313.1 1231.0 315.6 1233.3 316.6 1235.6 319.9 1238.0 322.1 1240.3 322.3 1242.6 324.0 1244.9 325.4 1247.3 327.5 1249.6 328.4 1251.9 329.7 1254.3 330.7 1256.6 333.9 1258.9 335.1 1261.2 335.6 1263.6 338.8 1265.9 340.6 1268.2 341.6 1270.5 343.7 1272.9 343.4 1275.2 344.8 1277.5 347.6 1279.9 349.6 1282.2 351.3 1284.5 352.4 1286.8 354.4 1289.2 355.0 1291.5 356.1 1293.8 358.3 1296.1 360.0 1298.5 359.4 1300.8 362.2 1303.1 362.3 1305.4 361.9 1307.8 361.2 1310.1 361.3 1312.4 359.7 1314.8 359.3 1317.1 357.5 1319.4 357.3 1321.7 355.7 1324.1 355.5 1326.4 354.4 1328.7 354.1 1331.0 353.6 1333.4 351.7 1335.7 351.3 1338.0 349.6 1340.4 349.3 1342.7 348.4 1345.0 348.7 1347.3 346.3 1349.7 346.5 1352.0 346.3 1354.3 345.5 1356.6 344.3 1359.0 343.1 1361.3 341.0 1363.6 341.0 1365.9 340.6 1368.3 337.7 1370.6 337.2 1372.9 337.6 1375.3 336.4 1377.6 335.1 1379.9 333.4 1382.2 330.9 1384.6 329.5 1386.9 329.2 1389.2 329.0 1391.5 327.2 1393.9 326.1 1396.2 324.9 1398.5 324.4 1400.9 321.4 1403.2 319.4 1405.5 318.1 1407.8 318.3 1410.2 315.6 1412.5 314.9 1414.8 311.8 1417.1 310.8 1419.5 307.8 1421.8 306.4 1424.1 306.5 1426.5 304.1 1428.8 300.7 1431.1 300.0 1433.4 298.2 1435.8 296.3 1438.1 293.5 1440.4 291.1 1442.7 290.2 1445.1 287.0 1447.4 286.1 1449.7 285.4 1452.0 281.5 1454.4 280.5 1456.7 279.5 1459.0 274.9 1461.4 275.3 1463.7 271.6 1466.0 269.6 1468.3 266.3 1470.7 265.3 1473.0 263.4 1475.3 260.8 1477.6 258.7 1480.0 255.3 1482.3 253.4 1484.6 249.9 1487.0 248.8 1489.3 246.0 1491.6 243.8 1493.9 239.4 1496.3 237.3 1498.6 234.9 1500.9 233.1 1503.2 231.3 1505.6 229.6 1507.9 225.4 1510.2 224.0 1512.6 222.9 1514.9 220.3 1517.2 218.2 1519.5 214.3 1521.9 211.6 1524.2 211.3 1526.5 207.5 1528.8 206.6 1531.2 203.5 1533.5 200.9 1535.8 199.4 1538.1 196.7 1540.5 195.7 1542.8 194.6 1545.1 191.0 1547.5 188.7 1549.8 187.6 1552.1 184.9 1554.4 182.9 1556.8 181.5 1559.1 178.5 1561.4 176.1 1563.7 173.6 1566.1 170.8 1568.4 169.3 1570.7 165.5 1573.1 163.6 1575.4 161.1 1577.7 159.4 1580.0 157.2 1582.4 155.2 1584.7 152.2 1587.0 150.9 1589.3 147.8 1591.7 145.0 1594.0 142.7 1596.3 140.4 1598.6 137.9 1601.0 134.7 1603.3 131.0 1605.6 127.7 1608.0 124.9 1610.3 122.7 1612.6 121.4 1614.9 116.9 1617.3 115.6 1619.6 111.3 1621.9 109.9 1624.2 105.1 1626.6 102.4 1628.9 98.3 1631.2 94.7 1633.6 91.8 1635.9 88.7 1638.2 85.9 1640.5 81.2 1642.9 76.1 1645.2 69.8 1647.5 63.2 1649.8 58.0 1652.2 47.9 1654.5 41.7 1656.8 35.1 1659.2 27.5" stroke="#1eeaf0" stroke-width="3.3" fill="none" stroke-linejoin="round"/><rect x="1658.7" y="20.0" width="3.2" height="3.2" fill="#1eeaf0"/><rect x="1659.8" y="15.9" width="3.2" height="3.2" fill="#1eeaf0"/><rect x="1660.9" y="11.9" width="3.2" height="3.2" fill="#1eeaf0"/><rect x="1662.0" y="7.9" width="3.2" height="3.2" fill="#1eeaf0"/><rect x="1663.0" y="3.8" width="3.2" height="3.2" fill="#1eeaf0"/><rect x="1663.9" y="-0.2" width="3.2" height="3.2" fill="#1eeaf0"/></svg>
<svg style="left:0;top:0" width="2560" height="860" viewBox="0 0 2560 860"><path d="M117.5 788.6H120M117.5 783.2H120M117.5 777.9H120M117.5 772.5H120M117.5 761.7H120M117.5 756.3H120M117.5 751.0H120M117.5 745.6H120M117.5 734.8H120M117.5 729.4H120M117.5 724.1H120M117.5 718.7H120M117.5 707.9H120M117.5 702.5H120M117.5 697.2H120M117.5 691.8H120M117.5 681.0H120M117.5 675.6H120M117.5 670.3H120M117.5 664.9H120M117.5 654.1H120M117.5 648.7H120M117.5 643.4H120M117.5 638.0H120M117.5 627.2H120M117.5 621.8H120M117.5 616.5H120M117.5 611.1H120M117.5 600.3H120M117.5 594.9H120M117.5 589.6H120M117.5 584.2H120M117.5 573.4H120M117.5 568.0H120M117.5 562.7H120M117.5 557.3H120M117.5 546.5H120M117.5 541.1H120M117.5 535.8H120M117.5 530.4H120M117.5 519.6H120M117.5 514.2H120M117.5 508.9H120M117.5 503.5H120M117.5 492.7H120M117.5 487.3H120M117.5 482.0H120M117.5 476.6H120M117.5 465.8H120M117.5 460.4H120M117.5 455.1H120M117.5 449.7H120M117.5 438.9H120M117.5 433.5H120M117.5 428.2H120M117.5 422.8H120M117.5 412.0H120M117.5 406.6H120M117.5 401.3H120M117.5 395.9H120M117.5 385.1H120M117.5 379.7H120M117.5 374.4H120M117.5 369.0H120M117.5 358.2H120M117.5 352.8H120M117.5 347.5H120M117.5 342.1H120M117.5 331.3H120M117.5 325.9H120M117.5 320.6H120M117.5 315.2H120M117.5 304.4H120M117.5 299.0H120M117.5 293.7H120M117.5 288.3H120M117.5 277.5H120M117.5 272.1H120M117.5 266.8H120M117.5 261.4H120M146.9 796V799M154.1 796V799M161.4 796V799M168.7 796V799M176.0 796V799M183.2 796V799M190.5 796V799M205.0 796V799M212.3 796V799M219.6 796V799M226.9 796V799M234.1 796V799M241.4 796V799M248.7 796V799M263.2 796V799M270.5 796V799M277.8 796V799M285.0 796V799M292.3 796V799M299.6 796V799M306.9 796V799M321.4 796V799M328.7 796V799M335.9 796V799M343.2 796V799M350.5 796V799M357.8 796V799M365.0 796V799M379.6 796V799M386.8 796V799M394.1 796V799M401.4 796V799M408.7 796V799M415.9 796V799M423.2 796V799M437.7 796V799M445.0 796V799M452.3 796V799M459.6 796V799M466.8 796V799M474.1 796V799M481.4 796V799M495.9 796V799M503.2 796V799M510.5 796V799M517.7 796V799M525.0 796V799M532.3 796V799M539.6 796V799M554.1 796V799M561.4 796V799M568.6 796V799M575.9 796V799M583.2 796V799M590.5 796V799M597.7 796V799M612.3 796V799M619.5 796V799M626.8 796V799M634.1 796V799M641.4 796V799M648.6 796V799M655.9 796V799M670.4 796V799M677.7 796V799M685.0 796V799M692.3 796V799M699.5 796V799M706.8 796V799M714.1 796V799M728.6 796V799M735.9 796V799M743.2 796V799M750.4 796V799M757.7 796V799M765.0 796V799M772.3 796V799M786.8 796V799M794.1 796V799M801.3 796V799M808.6 796V799M815.9 796V799M823.2 796V799M830.4 796V799M845.0 796V799M852.2 796V799M859.5 796V799M866.8 796V799M874.1 796V799M881.3 796V799M888.6 796V799M903.1 796V799M910.4 796V799M917.7 796V799M925.0 796V799M932.2 796V799M939.5 796V799M946.8 796V799M961.3 796V799M968.6 796V799M975.9 796V799M983.1 796V799M990.4 796V799M997.7 796V799M1005.0 796V799M1019.5 796V799M1026.8 796V799M1034.0 796V799M1041.3 796V799M1048.6 796V799M1055.9 796V799M1063.1 796V799M1077.7 796V799M1084.9 796V799M1092.2 796V799M1099.5 796V799M1106.8 796V799M1114.0 796V799M1121.3 796V799M1135.8 796V799M1143.1 796V799M1150.4 796V799M1157.7 796V799M1164.9 796V799M1172.2 796V799M1179.5 796V799M1194.0 796V799M1201.3 796V799M1208.6 796V799M1215.8 796V799M1223.1 796V799M1230.4 796V799M1237.7 796V799M1252.2 796V799M1259.5 796V799M1266.7 796V799M1274.0 796V799M1281.3 796V799M1288.6 796V799M1295.8 796V799M1310.4 796V799M1317.6 796V799M1324.9 796V799M1332.2 796V799M1339.5 796V799M1346.7 796V799M1354.0 796V799M1368.5 796V799M1375.8 796V799M1383.1 796V799M1390.4 796V799M1397.6 796V799M1404.9 796V799M1412.2 796V799M1426.7 796V799M1434.0 796V799M1441.3 796V799M1448.5 796V799M1455.8 796V799M1463.1 796V799M1470.4 796V799M1484.9 796V799M1492.2 796V799M1499.4 796V799M1506.7 796V799M1514.0 796V799M1521.3 796V799M1528.5 796V799M1543.1 796V799M1550.3 796V799M1557.6 796V799M1564.9 796V799M1572.2 796V799M1579.4 796V799M1586.7 796V799M1601.2 796V799M1608.5 796V799M1615.8 796V799M1623.1 796V799M1630.3 796V799M1637.6 796V799M1644.9 796V799M1659.4 796V799M1666.7 796V799M1674.0 796V799M1681.2 796V799M1688.5 796V799M1695.8 796V799M1703.1 796V799M1717.6 796V799M1724.9 796V799M1732.1 796V799M1739.4 796V799M1746.7 796V799M1754.0 796V799M1761.2 796V799M1775.8 796V799M1783.0 796V799M1790.3 796V799M1797.6 796V799M1804.9 796V799M1812.1 796V799M1819.4 796V799M1833.9 796V799M1841.2 796V799M1848.5 796V799M1855.8 796V799M1863.0 796V799M1870.3 796V799M1877.6 796V799M1892.1 796V799M1899.4 796V799M1906.7 796V799M1913.9 796V799M1921.2 796V799M1928.5 796V799M1935.8 796V799M1950.3 796V799M1957.6 796V799M1964.8 796V799M1972.1 796V799M1979.4 796V799M1986.7 796V799M1993.9 796V799M2008.5 796V799M2015.7 796V799M2023.0 796V799M2030.3 796V799M2037.6 796V799M2044.8 796V799M2052.1 796V799M2066.6 796V799M2073.9 796V799M2081.2 796V799M2088.5 796V799M2095.7 796V799M2103.0 796V799M2110.3 796V799M2124.8 796V799M2132.1 796V799M2139.4 796V799M2146.6 796V799M2153.9 796V799M2161.2 796V799M2168.5 796V799M2183.0 796V799M2190.3 796V799M2197.5 796V799M2204.8 796V799M2212.1 796V799M2219.4 796V799M2226.6 796V799M2241.2 796V799M2248.4 796V799M2255.7 796V799M2263.0 796V799M2270.3 796V799M2277.5 796V799M2284.8 796V799M2299.3 796V799M2306.6 796V799M2313.9 796V799M2321.2 796V799M2328.4 796V799M2335.7 796V799M2343.0 796V799M2357.5 796V799M2364.8 796V799M2372.1 796V799M2379.3 796V799M2386.6 796V799M2393.9 796V799M2401.2 796V799M2415.7 796V799M2423.0 796V799M2430.2 796V799M2437.5 796V799M2444.8 796V799M2452.1 796V799M2459.3 796V799" stroke="#20222c" stroke-width="1.2"/><path d="M114.5 794.0H120M114.5 767.1H120M114.5 740.2H120M114.5 713.3H120M114.5 686.4H120M114.5 659.5H120M114.5 632.6H120M114.5 605.7H120M114.5 578.8H120M114.5 551.9H120M114.5 525.0H120M114.5 498.1H120M114.5 471.2H120M114.5 444.3H120M114.5 417.4H120M114.5 390.5H120M114.5 363.6H120M114.5 336.7H120M114.5 309.8H120M114.5 282.9H120M114.5 256.0H120M139.6 796V801.5M197.8 796V801.5M255.9 796V801.5M314.1 796V801.5M372.3 796V801.5M430.5 796V801.5M488.7 796V801.5M546.8 796V801.5M605.0 796V801.5M663.2 796V801.5M721.4 796V801.5M779.5 796V801.5M837.7 796V801.5M895.9 796V801.5M954.1 796V801.5M1012.2 796V801.5M1070.4 796V801.5M1128.6 796V801.5M1186.8 796V801.5M1244.9 796V801.5M1303.1 796V801.5M1361.3 796V801.5M1419.5 796V801.5M1477.6 796V801.5M1535.8 796V801.5M1594.0 796V801.5M1652.1 796V801.5M1710.3 796V801.5M1768.5 796V801.5M1826.7 796V801.5M1884.8 796V801.5M1943.0 796V801.5M2001.2 796V801.5M2059.4 796V801.5M2117.6 796V801.5M2175.7 796V801.5M2233.9 796V801.5M2292.1 796V801.5M2350.2 796V801.5M2408.4 796V801.5M2466.6 796V801.5" stroke="#14161f" stroke-width="1.5"/></svg>
<div class="t" style="left:60px;top:784.5px;font-size:15.5px;line-height:18px;color:#0d0f18;width:53px;text-align:right;">0</div>
<div class="t" style="left:60px;top:757.6px;font-size:15.5px;line-height:18px;color:#0d0f18;width:53px;text-align:right;">5</div>
<div class="t" style="left:60px;top:730.7px;font-size:15.5px;line-height:18px;color:#0d0f18;width:53px;text-align:right;">10</div>
<div class="t" style="left:60px;top:703.8px;font-size:15.5px;line-height:18px;color:#0d0f18;width:53px;text-align:right;">15</div>
<div class="t" style="left:60px;top:676.9px;font-size:15.5px;line-height:18px;color:#0d0f18;width:53px;text-align:right;">20</div>
<div class="t" style="left:60px;top:650.0px;font-size:15.5px;line-height:18px;color:#0d0f18;width:53px;text-align:right;">25</div>
<div class="t" style="left:60px;top:623.1px;font-size:15.5px;line-height:18px;color:#0d0f18;width:53px;text-align:right;">30</div>
<div class="t" style="left:60px;top:596.2px;font-size:15.5px;line-height:18px;color:#0d0f18;width:53px;text-align:right;">35</div>
<div class="t" style="left:60px;top:569.3px;font-size:15.5px;line-height:18px;color:#0d0f18;width:53px;text-align:right;">40</div>
<div class="t" style="left:60px;top:542.4px;font-size:15.5px;line-height:18px;color:#0d0f18;width:53px;text-align:right;">45</div>
<div class="t" style="left:60px;top:515.5px;font-size:15.5px;line-height:18px;color:#0d0f18;width:53px;text-align:right;">50</div>
<div class="t" style="left:60px;top:488.6px;font-size:15.5px;line-height:18px;color:#0d0f18;width:53px;text-align:right;">55</div>
<div class="t" style="left:60px;top:461.7px;font-size:15.5px;line-height:18px;color:#0d0f18;width:53px;text-align:right;">60</div>
<div class="t" style="left:60px;top:434.8px;font-size:15.5px;line-height:18px;color:#0d0f18;width:53px;text-align:right;">65</div>
<div class="t" style="left:60px;top:407.9px;font-size:15.5px;line-height:18px;color:#0d0f18;width:53px;text-align:right;">70</div>
<div class="t" style="left:60px;top:381.0px;font-size:15.5px;line-height:18px;color:#0d0f18;width:53px;text-align:right;">75</div>
<div class="t" style="left:60px;top:354.1px;font-size:15.5px;line-height:18px;color:#0d0f18;width:53px;text-align:right;">80</div>
<div class="t" style="left:60px;top:327.2px;font-size:15.5px;line-height:18px;color:#0d0f18;width:53px;text-align:right;">85</div>
<div class="t" style="left:60px;top:300.3px;font-size:15.5px;line-height:18px;color:#0d0f18;width:53px;text-align:right;">90</div>
<div class="t" style="left:60px;top:273.4px;font-size:15.5px;line-height:18px;color:#0d0f18;width:53px;text-align:right;">95</div>
<div class="t" style="left:60px;top:246.5px;font-size:15.5px;line-height:18px;color:#0d0f18;width:53px;text-align:right;">100</div>
<div class="t" style="left:109.6px;top:803px;font-size:15.5px;line-height:18px;color:#0d0f18;width:60px;text-align:center;">0</div>
<div class="t" style="left:167.775px;top:803px;font-size:15.5px;line-height:18px;color:#0d0f18;width:60px;text-align:center;">0.2</div>
<div class="t" style="left:225.95px;top:803px;font-size:15.5px;line-height:18px;color:#0d0f18;width:60px;text-align:center;">0.4</div>
<div class="t" style="left:284.125px;top:803px;font-size:15.5px;line-height:18px;color:#0d0f18;width:60px;text-align:center;">0.6</div>
<div class="t" style="left:342.3px;top:803px;font-size:15.5px;line-height:18px;color:#0d0f18;width:60px;text-align:center;">0.8</div>
<div class="t" style="left:400.475px;top:803px;font-size:15.5px;line-height:18px;color:#0d0f18;width:60px;text-align:center;">1</div>
<div class="t" style="left:458.6500000000001px;top:803px;font-size:15.5px;line-height:18px;color:#0d0f18;width:60px;text-align:center;">1.2</div>
<div class="t" style="left:516.825px;top:803px;font-size:15.5px;line-height:18px;color:#0d0f18;width:60px;text-align:center;">1.4</div>
<div class="t" style="left:575.0px;top:803px;font-size:15.5px;line-height:18px;color:#0d0f18;width:60px;text-align:center;">1.6</div>
<div class="t" style="left:633.1750000000001px;top:803px;font-size:15.5px;line-height:18px;color:#0d0f18;width:60px;text-align:center;">1.8</div>
<div class="t" style="left:691.35px;top:803px;font-size:15.5px;line-height:18px;color:#0d0f18;width:60px;text-align:center;">2</div>
<div class="t" style="left:749.5250000000001px;top:803px;font-size:15.5px;line-height:18px;color:#0d0f18;width:60px;text-align:center;">2.2</div>
<div class="t" style="left:807.7000000000002px;top:803px;font-size:15.5px;line-height:18px;color:#0d0f18;width:60px;text-align:center;">2.4</div>
<div class="t" style="left:865.875px;top:803px;font-size:15.5px;line-height:18px;color:#0d0f18;width:60px;text-align:center;">2.6</div>
<div class="t" style="left:924.0500000000001px;top:803px;font-size:15.5px;line-height:18px;color:#0d0f18;width:60px;text-align:center;">2.8</div>
<div class="t" style="left:982.225px;top:803px;font-size:15.5px;line-height:18px;color:#0d0f18;width:60px;text-align:center;">3</div>
<div class="t" style="left:1040.4px;top:803px;font-size:15.5px;line-height:18px;color:#0d0f18;width:60px;text-align:center;">3.2</div>
<div class="t" style="left:1098.575px;top:803px;font-size:15.5px;line-height:18px;color:#0d0f18;width:60px;text-align:center;">3.4</div>
<div class="t" style="left:1156.75px;top:803px;font-size:15.5px;line-height:18px;color:#0d0f18;width:60px;text-align:center;">3.6</div>
<div class="t" style="left:1214.925px;top:803px;font-size:15.5px;line-height:18px;color:#0d0f18;width:60px;text-align:center;">3.8</div>
<div class="t" style="left:1273.1px;top:803px;font-size:15.5px;line-height:18px;color:#0d0f18;width:60px;text-align:center;">4</div>
<div class="t" style="left:1331.2749999999999px;top:803px;font-size:15.5px;line-height:18px;color:#0d0f18;width:60px;text-align:center;">4.2</div>
<div class="t" style="left:1389.45px;top:803px;font-size:15.5px;line-height:18px;color:#0d0f18;width:60px;text-align:center;">4.4</div>
<div class="t" style="left:1447.625px;top:803px;font-size:15.5px;line-height:18px;color:#0d0f18;width:60px;text-align:center;">4.6</div>
<div class="t" style="left:1505.8000000000002px;top:803px;font-size:15.5px;line-height:18px;color:#0d0f18;width:60px;text-align:center;">4.8</div>
<div class="t" style="left:1563.975px;top:803px;font-size:15.5px;line-height:18px;color:#0d0f18;width:60px;text-align:center;">5</div>
<div class="t" style="left:1622.1499999999999px;top:803px;font-size:15.5px;line-height:18px;color:#0d0f18;width:60px;text-align:center;">5.2</div>
<div class="t" style="left:1680.325px;top:803px;font-size:15.5px;line-height:18px;color:#0d0f18;width:60px;text-align:center;">5.4</div>
<div class="t" style="left:1738.5px;top:803px;font-size:15.5px;line-height:18px;color:#0d0f18;width:60px;text-align:center;">5.6</div>
<div class="t" style="left:1796.6750000000002px;top:803px;font-size:15.5px;line-height:18px;color:#0d0f18;width:60px;text-align:center;">5.8</div>
<div class="t" style="left:1854.85px;top:803px;font-size:15.5px;line-height:18px;color:#0d0f18;width:60px;text-align:center;">6</div>
<div class="t" style="left:1913.0249999999999px;top:803px;font-size:15.5px;line-height:18px;color:#0d0f18;width:60px;text-align:center;">6.2</div>
<div class="t" style="left:1971.2px;top:803px;font-size:15.5px;line-height:18px;color:#0d0f18;width:60px;text-align:center;">6.4</div>
<div class="t" style="left:2029.375px;top:803px;font-size:15.5px;line-height:18px;color:#0d0f18;width:60px;text-align:center;">6.6</div>
<div class="t" style="left:2087.55px;top:803px;font-size:15.5px;line-height:18px;color:#0d0f18;width:60px;text-align:center;">6.8</div>
<div class="t" style="left:2145.725px;top:803px;font-size:15.5px;line-height:18px;color:#0d0f18;width:60px;text-align:center;">7</div>
<div class="t" style="left:2203.9px;top:803px;font-size:15.5px;line-height:18px;color:#0d0f18;width:60px;text-align:center;">7.2</div>
<div class="t" style="left:2262.075px;top:803px;font-size:15.5px;line-height:18px;color:#0d0f18;width:60px;text-align:center;">7.4</div>
<div class="t" style="left:2320.25px;top:803px;font-size:15.5px;line-height:18px;color:#0d0f18;width:60px;text-align:center;">7.6</div>
<div class="t" style="left:2378.425px;top:803px;font-size:15.5px;line-height:18px;color:#0d0f18;width:60px;text-align:center;">7.8</div>
<div class="t" style="left:2436.6px;top:803px;font-size:15.5px;line-height:18px;color:#0d0f18;width:60px;text-align:center;">8</div>
<svg role="img" aria-label="压力" style="position:absolute;left:63.0px;top:551.0px;overflow:visible;transform:rotate(-90deg);transform-origin:0 0;" width="32.0" height="21.0"><text x="0" y="14.10" font-size="15" fill="#15171f">压力</text></svg>
<div class="t" style="left:63.5px;top:0px;font-size:15px;line-height:18px;color:#15171f;top:521px;transform:rotate(-90deg);transform-origin:0 0;">(g)</div>
<svg role="img" aria-label="行程" style="position:absolute;left:1267.0px;top:824.0px;overflow:visible;" width="31.0" height="20.3"><text x="0" y="13.63" font-size="14.5" fill="#15171f">行程</text></svg>
<div class="t" style="left:1297px;top:825px;font-size:14.5px;line-height:18px;color:#15171f;">(mm)</div>
<svg role="img" aria-label="测试进度" style="position:absolute;left:50.5px;top:899.0px;overflow:visible;" width="107.5" height="37.1"><text x="0" y="24.91" font-size="26.4" font-weight="300" fill="#2b2d35" stroke="#2b2d35" stroke-width="0.6" stroke-linejoin="round">测试进度</text></svg>
<div style="left:182px;top:896px;width:290px;height:36px;background:#0641da;border:1px solid #0a0f2e;border-right:2px solid #05060f;border-bottom:1px solid #3050b0;"></div>
<div style="left:51px;top:1022px;width:501.5px;height:374px;background:#9497a2;box-shadow:0 0 6px 2px #9497a2;"></div>
<div style="left:51px;top:985px;width:151px;height:50px;background:#000;box-shadow:1px 1px 2px rgba(40,40,50,.5);"></div>
<svg role="img" aria-label="标准参数" style="position:absolute;left:64.5px;top:990.5px;overflow:visible;" width="126.0" height="43.4"><text x="0" y="29.14" font-size="31" fill="#fff" stroke="#fff" stroke-width="0.31" stroke-linejoin="round">标准参数</text></svg>
<svg role="img" aria-label="下限" style="position:absolute;left:232.5px;top:1058.5px;overflow:visible;" width="38.5" height="26.6"><text x="0" y="17.86" font-size="18.25" fill="#2b2d35">下限</text></svg>
<svg role="img" aria-label="基准" style="position:absolute;left:309.5px;top:1058.5px;overflow:visible;" width="38.5" height="26.6"><text x="0" y="17.86" font-size="18.25" fill="#2b2d35">基准</text></svg>
<svg role="img" aria-label="上限" style="position:absolute;left:388.5px;top:1058.5px;overflow:visible;" width="38.5" height="26.6"><text x="0" y="17.86" font-size="18.25" fill="#2b2d35">上限</text></svg>
<svg role="img" aria-label="总行程" style="position:absolute;left:103.5px;top:1103.5px;overflow:visible;" width="58.4" height="26.3"><text x="0" y="17.67" font-size="18.8" fill="#2b2d35" stroke="#2b2d35" stroke-width="0.39" stroke-linejoin="round">总行程</text></svg>
<div style="left:221px;top:1121.5px;width:55px;height:5px;background:#9da0ab;border:1px solid #7f828d;border-top:none;"></div><div style="left:218px;top:1099.5px;width:62px;height:23px;background:#9699a4;border:1px solid #5a5d68;box-shadow:inset 1px 1px 0 #a6a9b3;"><div class="t" style="left:4px;top:1px;font-size:15.5px;line-height:19px;color:#06070c;">3.6</div></div>
<div style="left:301px;top:1121.5px;width:55px;height:5px;background:#9da0ab;border:1px solid #7f828d;border-top:none;"></div><div style="left:298px;top:1099.5px;width:62px;height:23px;background:#9699a4;border:1px solid #5a5d68;box-shadow:inset 1px 1px 0 #a6a9b3;"><div class="t" style="left:4px;top:1px;font-size:15.5px;line-height:19px;color:#06070c;">4</div></div>
<div style="left:378px;top:1121.5px;width:55px;height:5px;background:#9da0ab;border:1px solid #7f828d;border-top:none;"></div><div style="left:375px;top:1099.5px;width:62px;height:23px;background:#9699a4;border:1px solid #5a5d68;box-shadow:inset 1px 1px 0 #a6a9b3;"><div class="t" style="left:4px;top:1px;font-size:15.5px;line-height:19px;color:#06070c;">4.4</div></div>
<svg role="img" aria-label="总程压力" style="position:absolute;left:103.5px;top:1146.5px;overflow:visible;" width="77.2" height="26.3"><text x="0" y="17.67" font-size="18.8" fill="#2b2d35" stroke="#2b2d35" stroke-width="0.39" stroke-linejoin="round">总程压力</text></svg>
<div style="left:221px;top:1164.5px;width:55px;height:5px;background:#9da0ab;border:1px solid #7f828d;border-top:none;"></div><div style="left:218px;top:1142.5px;width:62px;height:23px;background:#9699a4;border:1px solid #5a5d68;box-shadow:inset 1px 1px 0 #a6a9b3;"><div class="t" style="left:4px;top:1px;font-size:15.5px;line-height:19px;color:#06070c;">50</div></div>
<div style="left:301px;top:1164.5px;width:55px;height:5px;background:#9da0ab;border:1px solid #7f828d;border-top:none;"></div><div style="left:298px;top:1142.5px;width:62px;height:23px;background:#9699a4;border:1px solid #5a5d68;box-shadow:inset 1px 1px 0 #a6a9b3;"><div class="t" style="left:4px;top:1px;font-size:15.5px;line-height:19px;color:#06070c;">60</div></div>
<div style="left:378px;top:1164.5px;width:55px;height:5px;background:#9da0ab;border:1px solid #7f828d;border-top:none;"></div><div style="left:375px;top:1142.5px;width:62px;height:23px;background:#9699a4;border:1px solid #5a5d68;box-shadow:inset 1px 1px 0 #a6a9b3;"><div class="t" style="left:4px;top:1px;font-size:15.5px;line-height:19px;color:#06070c;">70</div></div>
<svg role="img" aria-label="导通行程" style="position:absolute;left:103.5px;top:1189.5px;overflow:visible;" width="77.2" height="26.3"><text x="0" y="17.67" font-size="18.8" fill="#2b2d35" stroke="#2b2d35" stroke-width="0.39" stroke-linejoin="round">导通行程</text></svg>
<div style="left:221px;top:1207.5px;width:55px;height:5px;background:#9da0ab;border:1px solid #7f828d;border-top:none;"></div><div style="left:218px;top:1185.5px;width:62px;height:23px;background:#9699a4;border:1px solid #5a5d68;box-shadow:inset 1px 1px 0 #a6a9b3;"><div class="t" style="left:4px;top:1px;font-size:15.5px;line-height:19px;color:#06070c;">1.4</div></div>
<div style="left:301px;top:1207.5px;width:55px;height:5px;background:#9da0ab;border:1px solid #7f828d;border-top:none;"></div><div style="left:298px;top:1185.5px;width:62px;height:23px;background:#9699a4;border:1px solid #5a5d68;box-shadow:inset 1px 1px 0 #a6a9b3;"><div class="t" style="left:4px;top:1px;font-size:15.5px;line-height:19px;color:#06070c;">2</div></div>
<div style="left:378px;top:1207.5px;width:55px;height:5px;background:#9da0ab;border:1px solid #7f828d;border-top:none;"></div><div style="left:375px;top:1185.5px;width:62px;height:23px;background:#9699a4;border:1px solid #5a5d68;box-shadow:inset 1px 1px 0 #a6a9b3;"><div class="t" style="left:4px;top:1px;font-size:15.5px;line-height:19px;color:#06070c;">2.6</div></div>
<svg role="img" aria-label="导通压力" style="position:absolute;left:103.5px;top:1232.5px;overflow:visible;" width="77.2" height="26.3"><text x="0" y="17.67" font-size="18.8" fill="#2b2d35" stroke="#2b2d35" stroke-width="0.39" stroke-linejoin="round">导通压力</text></svg>
<div style="left:221px;top:1250.5px;width:55px;height:5px;background:#9da0ab;border:1px solid #7f828d;border-top:none;"></div><div style="left:218px;top:1228.5px;width:62px;height:23px;background:#9699a4;border:1px solid #5a5d68;box-shadow:inset 1px 1px 0 #a6a9b3;"><div class="t" style="left:4px;top:1px;font-size:15.5px;line-height:19px;color:#06070c;">30</div></div>
<div style="left:301px;top:1250.5px;width:55px;height:5px;background:#9da0ab;border:1px solid #7f828d;border-top:none;"></div><div style="left:298px;top:1228.5px;width:62px;height:23px;background:#9699a4;border:1px solid #5a5d68;box-shadow:inset 1px 1px 0 #a6a9b3;"><div class="t" style="left:4px;top:1px;font-size:15.5px;line-height:19px;color:#06070c;">45</div></div>
<div style="left:378px;top:1250.5px;width:55px;height:5px;background:#9da0ab;border:1px solid #7f828d;border-top:none;"></div><div style="left:375px;top:1228.5px;width:62px;height:23px;background:#9699a4;border:1px solid #5a5d68;box-shadow:inset 1px 1px 0 #a6a9b3;"><div class="t" style="left:4px;top:1px;font-size:15.5px;line-height:19px;color:#06070c;">60</div></div>
<svg role="img" aria-label="预紧力" style="position:absolute;left:103.5px;top:1275.5px;overflow:visible;" width="58.4" height="26.3"><text x="0" y="17.67" font-size="18.8" fill="#2b2d35" stroke="#2b2d35" stroke-width="0.39" stroke-linejoin="round">预紧力</text></svg>
<div style="left:221px;top:1293.5px;width:55px;height:5px;background:#9da0ab;border:1px solid #7f828d;border-top:none;"></div><div style="left:218px;top:1271.5px;width:62px;height:23px;background:#9699a4;border:1px solid #5a5d68;box-shadow:inset 1px 1px 0 #a6a9b3;"><div class="t" style="left:4px;top:1px;font-size:15.5px;line-height:19px;color:#06070c;">20</div></div>
<div style="left:301px;top:1293.5px;width:55px;height:5px;background:#9da0ab;border:1px solid #7f828d;border-top:none;"></div><div style="left:298px;top:1271.5px;width:62px;height:23px;background:#9699a4;border:1px solid #5a5d68;box-shadow:inset 1px 1px 0 #a6a9b3;"><div class="t" style="left:4px;top:1px;font-size:15.5px;line-height:19px;color:#06070c;">30</div></div>
<div style="left:378px;top:1293.5px;width:55px;height:5px;background:#9da0ab;border:1px solid #7f828d;border-top:none;"></div><div style="left:375px;top:1271.5px;width:62px;height:23px;background:#9699a4;border:1px solid #5a5d68;box-shadow:inset 1px 1px 0 #a6a9b3;"><div class="t" style="left:4px;top:1px;font-size:15.5px;line-height:19px;color:#06070c;">50</div></div>
<svg role="img" aria-label="测试类型选择" style="position:absolute;left:103.5px;top:1334.5px;overflow:visible;" width="116.5" height="26.6"><text x="0" y="17.86" font-size="19.08" fill="#2b2d35" stroke="#2b2d35" stroke-width="0.4" stroke-linejoin="round">测试类型选择</text></svg>
<div style="left:250px;top:1330px;width:121px;height:29px;background:#e2e1fb;box-shadow:inset 1px 1px 0 #f4f4ff, inset -1px -1px 0 #bdbcda;"><div class="t" style="left:6px;top:5px;font-size:16.5px;line-height:20px;color:#6e6e84;">Key-R</div><div style="left:105px;top:2px;width:15px;height:25px;background:#e2e1fb;border:1px solid #8e8da8;"></div><svg style="left:108px;top:11px" width="10" height="6" viewBox="0 0 10 6"><path d="M0.500 0.500h9L5 5.500z" fill="#5d5d78"/></svg></div>
<div style="left:375px;top:1331px;width:70px;height:27px;background:#a9a7cf;box-shadow:inset 1px 1px 0 #c8c6e6, inset -1px -2px 0 #8c8ab2, 0 1px 1px #77768f;"><svg role="img" aria-label="确认" style="position:absolute;left:21.5px;top:5.5px;overflow:visible;" width="31.0" height="20.3"><text x="0" y="13.63" font-size="14.5" font-weight="bold" fill="#f4f4fb">确认</text></svg></div>
<div style="left:644.5px;top:970.5px;width:1133px;height:425px;background:#9497a2;box-shadow:0 0 6px 2px #9497a2;"></div>
<div style="left:611px;top:896px;width:324px;height:86px;background:#000;box-shadow:1px 1px 2px rgba(40,40,50,.5);"></div>
<svg role="img" aria-label="操作" style="position:absolute;left:631.0px;top:914.5px;overflow:visible;" width="87.5" height="60.2"><text x="0" y="40.42" font-size="42.75" fill="#fff" stroke="#fff" stroke-width="0.6" stroke-linejoin="round">操作</text></svg>
<svg role="img" aria-label="Operation" style="position:absolute;left:731.0px;top:918.0px;overflow:visible;" width="183.0" height="56.0"><text x="2" y="37.60" font-size="40" fill="#fff" stroke="#fff" stroke-width="0.4" stroke-linejoin="round" textLength="180" lengthAdjust="spacingAndGlyphs">Operation</text></svg>
<div style="left:1195px;top:994px;width:2px;height:380px;background:#a9acb6;"></div>
<div style="left:729px;top:1032px;width:336px;height:60px;background:#757a88;border:2px solid #0c0d12;box-shadow:inset 1px 1px 0 0 #c9ccd4, inset -1px -2px 0 0 #3f424d;"><svg role="img" aria-label="起动" style="position:absolute;left:147.5px;top:16.5px;overflow:visible;" width="39.0" height="25.9"><text x="0" y="17.39" font-size="18.5" font-weight="bold" fill="#fff">起动</text></svg></div>
<div style="left:729px;top:1117px;width:336px;height:60px;background:#858a95;border:2px solid #0c0d12;box-shadow:inset 1px 1px 0 0 #c9ccd4, inset -1px -2px 0 0 #3f424d;"><svg role="img" aria-label="停止" style="position:absolute;left:147.5px;top:16.5px;overflow:visible;" width="39.0" height="25.9"><text x="0" y="17.39" font-size="18.5" font-weight="bold" fill="#fff">停止</text></svg></div>
<div style="left:729px;top:1223px;width:336px;height:132px;border:1px solid #686b75;"></div>
<svg role="img" aria-label="等待起动指令或" style="position:absolute;left:732.5px;top:1226.5px;overflow:visible;" width="129.0" height="25.2"><text x="0" y="16.92" font-size="18.14" fill="#797c87">等待起动指令或</text></svg>
<svg role="img" aria-label="‘起动’" style="position:absolute;left:866.0px;top:1226.5px;overflow:visible;" width="62.0" height="25.2"><text x="9" y="16.92" font-size="16.5" fill="#797c87">‘起动’</text></svg>
<svg role="img" aria-label="按钮被按下......" style="position:absolute;left:931.0px;top:1226.5px;overflow:visible;" width="116.0" height="25.2"><text x="0" y="16.92" font-size="17.5" fill="#797c87">按钮被按下......</text></svg>
<svg role="img" aria-label="手动移动马达" style="position:absolute;left:1406.0px;top:1006.0px;overflow:visible;" width="187.0" height="43.4"><text x="0" y="29.14" font-size="30.83" font-weight="300" fill="#eceef2">手动移动马达</text></svg>
<svg role="img" aria-label="马达选择" style="position:absolute;left:1310.5px;top:1076.5px;overflow:visible;" width="78.5" height="26.6"><text x="0" y="17.86" font-size="19.12" fill="#2e3038" stroke="#2e3038" stroke-width="0.4" stroke-linejoin="round">马达选择</text></svg>
<div style="left:1309px;top:1113px;width:143px;height:30px;background:linear-gradient(180deg,#ffffff 0%,#f2f2f2 60%,#e1e1e1 100%);box-shadow:inset 0 0 0 1px #d4d4d8, 0 1px 0 #a8abb4;"><div class="t" style="left:5px;top:4px;font-size:16px;line-height:20px;color:#000;">Y motor</div><div style="left:121px;top:1px;width:21px;height:28px;background:linear-gradient(180deg,#f4f4f4,#d2d2d2);border-left:1px solid #c2c2c6;"></div><svg style="left:124px;top:11px" width="15" height="10" viewBox="0 0 15 10"><path d="M0.500 0.500h14L7.500 9.500z" fill="#000"/></svg></div>
<svg role="img" aria-label="方向选择" style="position:absolute;left:1310.5px;top:1183.0px;overflow:visible;" width="78.5" height="26.6"><text x="0" y="17.86" font-size="19.12" fill="#2e3038" stroke="#2e3038" stroke-width="0.4" stroke-linejoin="round">方向选择</text></svg>
<svg style="left:1314px;top:1227px" width="14" height="14" viewBox="0 0 14 14"><circle cx="7" cy="7" r="5.800" fill="#f2f4f8" stroke="#59617a" stroke-width="1"/><circle cx="7" cy="7" r="3.300" fill="#1d5f8f"/><circle cx="6.200" cy="6" r="1.300" fill="#6fb6d8"/></svg>
<svg role="img" aria-label="正转" style="position:absolute;left:1332.0px;top:1223.5px;overflow:visible;" width="35.0" height="23.8"><text x="0" y="15.98" font-size="16.5" fill="#08090d">正转</text></svg>
<svg style="left:1415.5px;top:1227px" width="14" height="14" viewBox="0 0 14 14"><circle cx="7" cy="7" r="5.800" fill="#e6e7ea" stroke="#9a9ca6" stroke-width="1"/><circle cx="6.500" cy="6.500" r="3" fill="#f8f8fa"/></svg>
<svg role="img" aria-label="反转" style="position:absolute;left:1432.5px;top:1223.5px;overflow:visible;" width="35.5" height="23.8"><text x="0" y="15.98" font-size="16.75" fill="#08090d">反转</text></svg>
<svg role="img" aria-label="移动距离" style="position:absolute;left:1310.5px;top:1279.5px;overflow:visible;" width="78.5" height="26.6"><text x="0" y="17.86" font-size="19.12" fill="#2e3038" stroke="#2e3038" stroke-width="0.4" stroke-linejoin="round">移动距离</text></svg>
<div style="left:1310px;top:1316.5px;width:114.5px;height:29.5px;background:#fff;"><div class="t" style="left:0;top:3px;width:114px;text-align:center;font-size:20px;line-height:24px;color:#000;">0.50</div></div>
<div style="left:1557.5px;top:1085.5px;width:119.0px;height:119.0px;border-radius:50%;background:#757a88;border:2px solid #1b1c22;box-shadow:1.500px 2px 1px #d6d8de, inset 1px 1px 2px 1px #9ea2ad, inset -2px -3px 3px 0 #4c4f5a;"></div><div class="t" style="left:1557px;top:1131.5px;font-size:23px;line-height:27px;color:#fff;width:120px;text-align:center;transform:scaleX(0.94);transform-origin:50% 0;">RUN</div>
<div style="left:1558.0px;top:1236.5px;width:119.0px;height:119.0px;border-radius:50%;background:#757a88;border:2px solid #1b1c22;box-shadow:1.500px 2px 1px #d6d8de, inset 1px 1px 2px 1px #9ea2ad, inset -2px -3px 3px 0 #4c4f5a;"></div><div class="t" style="left:1557.5px;top:1282.5px;font-size:23px;line-height:27px;color:#fff;width:120px;text-align:center;transform:scaleX(0.87);transform-origin:50% 0;">STOP</div>
<div style="left:1871.5px;top:971px;width:614px;height:425px;background:#838995;box-shadow:0 0 6px 2px #838995;"></div>
<div style="left:1837px;top:896px;width:214px;height:86px;background:#000;box-shadow:1px 1px 2px rgba(40,40,50,.5);"></div>
<svg role="img" aria-label="实测结果" style="position:absolute;left:1856.0px;top:915.5px;overflow:visible;" width="176.0" height="60.9"><text x="0" y="40.89" font-size="43.5" fill="#fff" stroke="#fff" stroke-width="0.6" stroke-linejoin="round">实测结果</text></svg>
<svg role="img" aria-label="实测数值" style="position:absolute;left:2080.5px;top:1034.0px;overflow:visible;" width="80.5" height="27.4"><text x="0" y="18.42" font-size="19.63" fill="#2b2d35" stroke="#2b2d35" stroke-width="0.39" stroke-linejoin="round">实测数值</text></svg>
<svg role="img" aria-label="偏差率" style="position:absolute;left:2222.0px;top:1034.0px;overflow:visible;" width="59.5" height="27.0"><text x="0" y="18.14" font-size="19.17" fill="#2b2d35" stroke="#2b2d35" stroke-width="0.4" stroke-linejoin="round">偏差率</text></svg>
<svg role="img" aria-label="总行程" style="position:absolute;left:1944.5px;top:1080.0px;overflow:visible;" width="58.4" height="26.3"><text x="0" y="17.67" font-size="18.8" fill="#2b2d35" stroke="#2b2d35" stroke-width="0.39" stroke-linejoin="round">总行程</text></svg>
<div style="left:2077px;top:1075px;width:88px;height:27.5px;background:#66ff00;box-shadow:inset 1px 1px 0 rgba(255,255,255,.35), inset -1px -1px 0 rgba(0,0,0,.25), 0 1px 1px rgba(60,60,70,.6);"><div class="t" style="right:6px;top:3px;font-size:19.500px;line-height:23px;color:#0a1400;">3.73</div></div>
<div style="left:2208px;top:1075px;width:88px;height:27.5px;background:#858a95;border:1px solid #6d717c;box-shadow:inset 1px 1px 0 rgba(255,255,255,.25), 0 1px 1px rgba(60,60,70,.5);"><div class="t" style="right:4px;top:2px;font-size:19.500px;line-height:23px;color:#08090d;">-6.77%</div></div>
<svg role="img" aria-label="总程压力" style="position:absolute;left:1944.5px;top:1121.0px;overflow:visible;" width="77.2" height="26.3"><text x="0" y="17.67" font-size="18.8" fill="#2b2d35" stroke="#2b2d35" stroke-width="0.39" stroke-linejoin="round">总程压力</text></svg>
<div style="left:2077px;top:1116px;width:88px;height:27.5px;background:#ff0000;box-shadow:inset 1px 1px 0 rgba(255,255,255,.35), inset -1px -1px 0 rgba(0,0,0,.25), 0 1px 1px rgba(60,60,70,.6);"><div class="t" style="right:6px;top:3px;font-size:19.500px;line-height:23px;color:#2a0000;">81.73</div></div>
<div style="left:2208px;top:1116px;width:88px;height:27.5px;background:#b7bac2;border:1px solid #6d717c;box-shadow:inset 1px 1px 0 rgba(255,255,255,.25), 0 1px 1px rgba(60,60,70,.5);"><div class="t" style="right:4px;top:2px;font-size:19.500px;line-height:23px;color:#08090d;">36.22%</div></div>
<svg role="img" aria-label="导通行程" style="position:absolute;left:1944.5px;top:1166.0px;overflow:visible;" width="77.2" height="26.3"><text x="0" y="17.67" font-size="18.8" fill="#2b2d35" stroke="#2b2d35" stroke-width="0.39" stroke-linejoin="round">导通行程</text></svg>
<div style="left:2077px;top:1161px;width:88px;height:27.5px;background:#ff0000;box-shadow:inset 1px 1px 0 rgba(255,255,255,.35), inset -1px -1px 0 rgba(0,0,0,.25), 0 1px 1px rgba(60,60,70,.6);"><div class="t" style="right:6px;top:3px;font-size:19.500px;line-height:23px;color:#2a0000;">2.97</div></div>
<div style="left:2208px;top:1161px;width:88px;height:27.5px;background:#858a95;border:1px solid #6d717c;box-shadow:inset 1px 1px 0 rgba(255,255,255,.25), 0 1px 1px rgba(60,60,70,.5);"><div class="t" style="right:4px;top:2px;font-size:19.500px;line-height:23px;color:#08090d;">48.70%</div></div>
<svg role="img" aria-label="导通压力" style="position:absolute;left:1944.5px;top:1208.5px;overflow:visible;" width="77.2" height="26.3"><text x="0" y="17.67" font-size="18.8" fill="#2b2d35" stroke="#2b2d35" stroke-width="0.39" stroke-linejoin="round">导通压力</text></svg>
<div style="left:2077px;top:1203.5px;width:88px;height:27.5px;background:#66ff00;box-shadow:inset 1px 1px 0 rgba(255,255,255,.35), inset -1px -1px 0 rgba(0,0,0,.25), 0 1px 1px rgba(60,60,70,.6);"><div class="t" style="right:6px;top:3px;font-size:19.500px;line-height:23px;color:#0a1400;">41.74</div></div>
<div style="left:2208px;top:1203.5px;width:88px;height:27.5px;background:#b7bac2;border:1px solid #6d717c;box-shadow:inset 1px 1px 0 rgba(255,255,255,.25), 0 1px 1px rgba(60,60,70,.5);"><div class="t" style="right:4px;top:2px;font-size:19.500px;line-height:23px;color:#08090d;">-7.25%</div></div>
<svg role="img" aria-label="预紧力" style="position:absolute;left:1944.5px;top:1252.0px;overflow:visible;" width="58.4" height="26.3"><text x="0" y="17.67" font-size="18.8" fill="#2b2d35" stroke="#2b2d35" stroke-width="0.39" stroke-linejoin="round">预紧力</text></svg>
<div style="left:2077px;top:1247px;width:88px;height:27.5px;background:#ff0000;box-shadow:inset 1px 1px 0 rgba(255,255,255,.35), inset -1px -1px 0 rgba(0,0,0,.25), 0 1px 1px rgba(60,60,70,.6);"><div class="t" style="right:6px;top:3px;font-size:19.500px;line-height:23px;color:#2a0000;">15.61</div></div>
<div style="left:2208px;top:1247px;width:88px;height:27.5px;background:#858a95;border:1px solid #6d717c;box-shadow:inset 1px 1px 0 rgba(255,255,255,.25), 0 1px 1px rgba(60,60,70,.5);"><div class="t" style="right:4px;top:2px;font-size:19.500px;line-height:23px;color:#08090d;">-47.97%</div></div>
<div style="left:2087px;top:1325.5px;width:204px;height:35px;background:#757a88;border:2px solid #0c0d12;box-shadow:inset 1px 1px 0 1px #c5c8d0, inset -1px -2px 0 1px #4d505b;"><svg role="img" aria-label="统计图显示" style="position:absolute;left:57.5px;top:5.0px;overflow:visible;" width="87.0" height="23.8"><text x="0" y="15.98" font-size="17" fill="#fff">统计图显示</text></svg></div>
<div style="left:0px;top:1393px;width:2560px;height:47px;background:linear-gradient(180deg,#8ea2bb 0px,#869ab3 4px,#8196b0 24px,#7f94ae 48px);"></div>
<div style="left:0px;top:1392px;width:2560px;height:1px;background:#4e5a6b;"></div>
<div style="left:0px;top:1393px;width:2560px;height:1px;background:#b9c8da;"></div>
<svg style="left:10px;top:1393px" width="46" height="46" viewBox="0 0 46 46"><defs><radialGradient id="orb" cx="50%" cy="35%" r="65%"><stop offset="0" stop-color="#7fc4ee"/><stop offset=".55" stop-color="#2a78c0"/><stop offset="1" stop-color="#0e3a78"/></radialGradient></defs><circle cx="23" cy="23" r="21.500" fill="#1b2d4a"/><circle cx="23" cy="23" r="20" fill="url(#orb)"/><path d="M4.500 18 a19 19 0 0 1 37 0 q-18 -7 -37 0z" fill="#cfe6f8" opacity=".35"/><path d="M13.500 14.500 q4.500-2.500 8-.5 l-1.600 7.500 q-3.500-2-8 .5z" fill="#e8502a"/><path d="M23.500 14.600 q4 2 8.500-.6 l-1.600 7.500 q-4.500 2.500-8.500.5z" fill="#7cc142"/><path d="M11.400 23.600 q4.500-2.500 8-.5 l-1.600 7.500 q-3.500-2-8 .5z" fill="#3a9be8"/><path d="M21.400 23.700 q4 2 8.500-.6 l-1.600 7.500 q-4.500 2.500-8.500.5z" fill="#f8c52c"/></svg>
<svg style="left:91px;top:1397px" width="30" height="38" viewBox="0 0 30 38"><rect x="1" y="1" width="27" height="36" rx="2" fill="#b9d9f2" stroke="#5e92c4" stroke-width="1.200"/><rect x="3.500" y="4" width="22" height="10" fill="#e9f3fb" stroke="#7ea9d0" stroke-width=".8"/><rect x="3.500" y="4" width="22" height="2" fill="#f0a64a"/><path d="M19 8h4v4h-4z" fill="none" stroke="#446a94" stroke-width="1"/><rect x="4.0" y="17" width="4" height="3.500" fill="#f2f8fd" stroke="#7ea9d0" stroke-width=".5"/><rect x="4.0" y="22" width="4" height="3.500" fill="#f2f8fd" stroke="#7ea9d0" stroke-width=".5"/><rect x="4.0" y="27" width="4" height="3.500" fill="#f2f8fd" stroke="#7ea9d0" stroke-width=".5"/><rect x="4.0" y="32" width="4" height="3.500" fill="#f2f8fd" stroke="#7ea9d0" stroke-width=".5"/><rect x="9.5" y="17" width="4" height="3.500" fill="#f2f8fd" stroke="#7ea9d0" stroke-width=".5"/><rect x="9.5" y="22" width="4" height="3.500" fill="#f2f8fd" stroke="#7ea9d0" stroke-width=".5"/><rect x="9.5" y="27" width="4" height="3.500" fill="#f2f8fd" stroke="#7ea9d0" stroke-width=".5"/><rect x="9.5" y="32" width="4" height="3.500" fill="#f2f8fd" stroke="#7ea9d0" stroke-width=".5"/><rect x="15.0" y="17" width="4" height="3.500" fill="#f2f8fd" stroke="#7ea9d0" stroke-width=".5"/><rect x="15.0" y="22" width="4" height="3.500" fill="#f2f8fd" stroke="#7ea9d0" stroke-width=".5"/><rect x="15.0" y="27" width="4" height="3.500" fill="#f2f8fd" stroke="#7ea9d0" stroke-width=".5"/><rect x="15.0" y="32" width="4" height="3.500" fill="#f2f8fd" stroke="#7ea9d0" stroke-width=".5"/><rect x="20.5" y="17" width="4" height="3.500" fill="#f2f8fd" stroke="#7ea9d0" stroke-width=".5"/><rect x="20.5" y="22" width="4" height="3.500" fill="#f2f8fd" stroke="#7ea9d0" stroke-width=".5"/><rect x="20.500" y="27" width="4" height="8.500" fill="#f0a64a" stroke="#c77d28" stroke-width=".5"/></svg>
<svg style="left:154px;top:1396px" width="40" height="38" viewBox="0 0 40 38"><path d="M12 3 L33 5 L38 30 L24 36 Z" fill="#f3f3f0" stroke="#b9b9b0" stroke-width=".8"/><path d="M33 5 L38 30 L36 31 L31 6z" fill="#c98a3c"/><path d="M11 3 L31 5 L22 33 L2 27 Z" fill="#8ed0e0" stroke="#5aa5bb" stroke-width=".8"/><path d="M11 3 L31 5 L29.500 9 L9.500 7 Z" fill="#dfe6e8"/><path d="M12 3.500v3M15 3.800v3M18 4.100v3M21 4.400v3M24 4.700v3M27 5v3" stroke="#777" stroke-width="1"/><path d="M8 10 L27 13 L22 33 L2 27 Z" fill="#a9dce8" opacity=".7"/></svg>
<div style="left:212px;top:1393px;width:158px;height:46px;border:1px solid #5a6a80;border-radius:3px;box-shadow:inset 0 0 0 1px rgba(255,255,255,.7);background:linear-gradient(180deg,#dfe6ee 0%,#c6d0dc 45%,#a9b7c8 55%,#b7c4d3 100%);"></div>
<svg style="left:222px;top:1399px" width="36" height="33" viewBox="0 0 36 33"><rect x="0" y="0" width="36" height="33" fill="#fff"/><rect x="0" y="0" width="36" height="4" fill="#2266cc"/><rect x="29" y="1" width="6" height="2" fill="#9cc4f0"/><rect x="0" y="31.500" width="36" height="1.500" fill="#2266cc"/><rect x="6" y="6" width="24" height="24" fill="#9aa3a0"/><rect x="8" y="9" width="20" height="17" fill="#0b140b"/><path d="M8 18 q3-9 6 0 t6 0 t6 0" stroke="#2fbf5a" stroke-width="1.200" fill="none"/><path d="M12.500 11 L24.500 17.500 L12.500 24 Z" fill="#f4d90c" stroke="#5a4a00" stroke-width=".8"/><path d="M16 17.500h4M18 15.500v4" stroke="#222" stroke-width="1.200"/><path d="M9 7.500h2M12 7.500h2M15 7.500h2M18 7.500h2M21 7.500h2M24 7.500h2M9 28h2M12 28h2M15 28h2M18 28h2M21 28h2M24 28h2" stroke="#222" stroke-width="1.400"/><rect x="5" y="16" width="3" height="2" fill="#d64a1a"/><rect x="28" y="16" width="3" height="2" fill="#d64a1a"/><rect x="28" y="20" width="3" height="2" fill="#2a6ad0"/></svg>
<div class="t" style="left:265.5px;top:1406px;font-size:16.5px;line-height:20px;color:#fff;transform:scaleX(0.93);transform-origin:0 0;text-shadow:0 0 2px rgba(40,50,70,.6);">Keytest_G...</div>
<svg style="left:2303px;top:1407px" width="20" height="22" viewBox="0 0 20 22"><ellipse cx="10" cy="12" rx="7.500" ry="8.500" fill="#111"/><ellipse cx="10" cy="15" rx="5.200" ry="5.500" fill="#fff"/><ellipse cx="10" cy="5.500" rx="4.800" ry="4.500" fill="#111"/><ellipse cx="8.300" cy="4.800" rx="1" ry="1.400" fill="#fff"/><ellipse cx="11.700" cy="4.800" rx="1" ry="1.400" fill="#fff"/><ellipse cx="10" cy="7.600" rx="2.600" ry="1" fill="#f2a20c"/><path d="M4.500 9.500 q5.500 3 11 0 l.5 2.500 q-6 3-12 0z" fill="#e2231a"/><path d="M6 11.500 l1.500 5 2-1 -1-4z" fill="#e2231a"/><ellipse cx="6" cy="20.500" rx="3" ry="1.200" fill="#f2a20c"/><ellipse cx="14" cy="20.500" rx="3" ry="1.200" fill="#f2a20c"/></svg>
<svg style="left:2333px;top:1407px" width="20" height="21" viewBox="0 0 20 21"><path d="M0 14h3v7H0z M4.500 11h3v10h-3z M9 7.500h3V21H9z M13.500 4h3v17h-3z M17 0.500h3V21h-3z" fill="#62f218"/></svg>
<svg style="left:2363px;top:1407px" width="21" height="21" viewBox="0 0 21 21"><path d="M1.500 2.500 L8 2 L12.500 8.500 L16 2 L20 1 L14.500 9 L16.500 13 L11.500 12.500 L6 19.500 L4.500 19 L9 10.500 Z" fill="#fff" stroke="#4a5668" stroke-width="1"/></svg>
<svg style="left:2392px;top:1406px" width="22" height="23" viewBox="0 0 22 23"><path d="M1 8.500h4.500L12 2.500v18L5.500 14.500H1z" fill="#e8703a" stroke="#8a3a1a" stroke-width=".8"/><path d="M3 9.500h3l5-4.500v5z" fill="#f6b28e" opacity=".7"/><path d="M14.500 7.500q2.500 4 0 8M17.500 5q4.500 6.500 0 13" fill="none" stroke="#5c6674" stroke-width="1.500"/></svg>
<svg style="left:2424px;top:1409px" width="18" height="15" viewBox="0 0 18 15"><path d="M0.500 10.500h3v4h-3z M4.500 7.500h3v7h-3z M8.500 4.500h3v10h-3z M12.500 0.500h3.500v14h-3.500z" fill="#fff" stroke="#3a4658" stroke-width="1"/></svg>
<div class="t" style="left:2448px;top:1397px;font-size:15.5px;line-height:19px;color:#fff;width:100px;text-align:center;">15:56</div>
<div class="t" style="left:2448px;top:1419px;font-size:15.5px;line-height:19px;color:#fff;width:100px;text-align:center;transform:scaleX(1.07);transform-origin:50% 0;">2019/1/22</div>
<div style="left:2545px;top:1393px;width:15px;height:47px;background:linear-gradient(90deg,#5d6b7e,#7a8aa0 40%,#66758a);border-left:1px solid #3f4a5a;box-shadow:inset 1px 0 0 #a8b6c8;"></div>
</div>
</body></html>
